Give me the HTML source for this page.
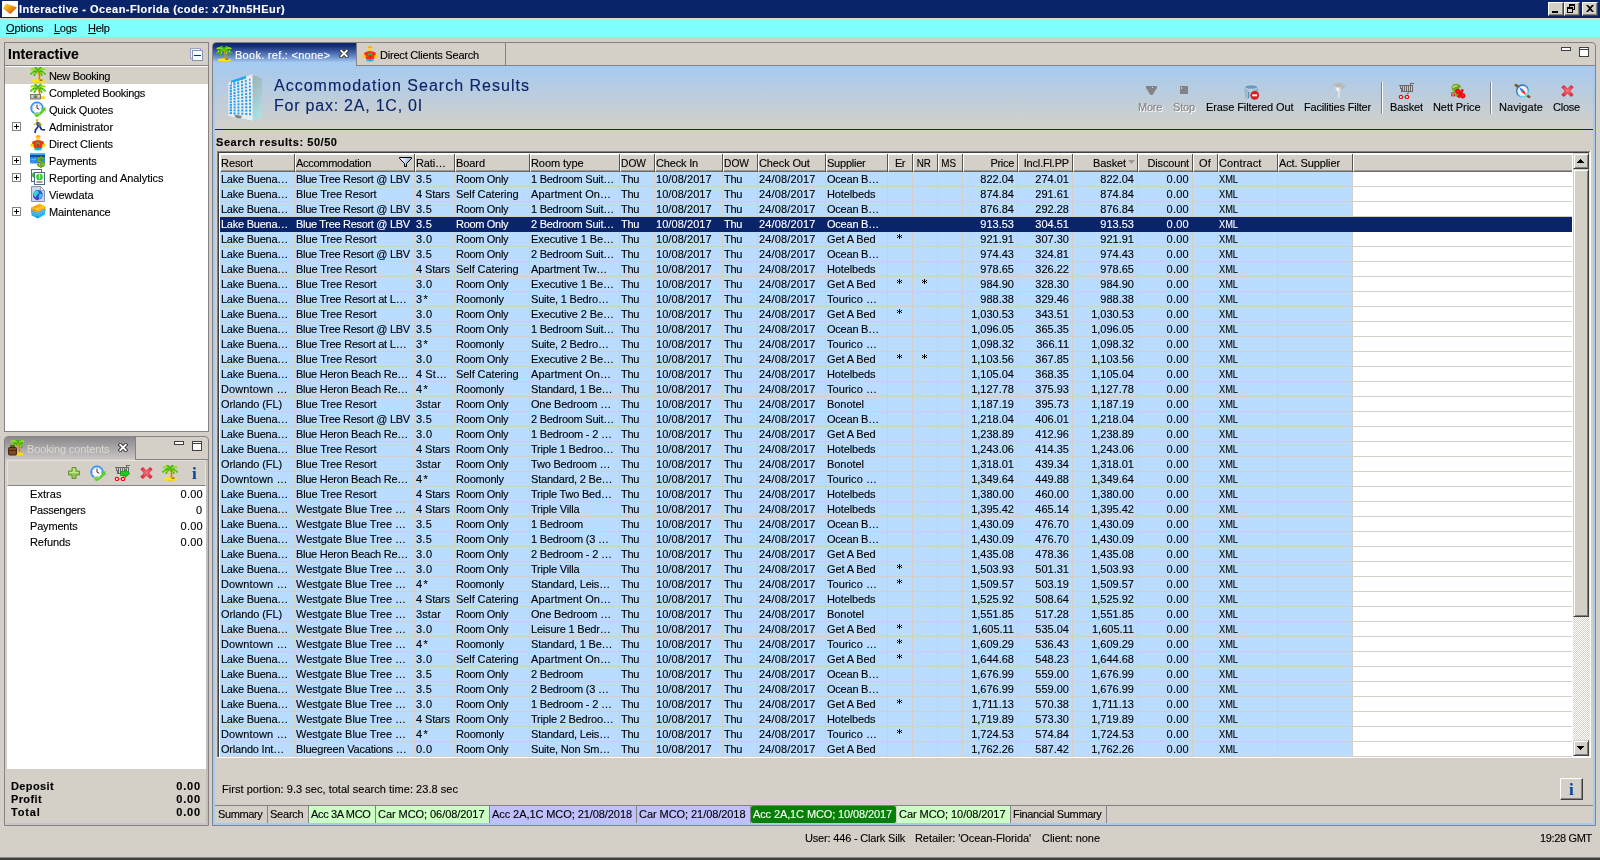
<!DOCTYPE html><html><head><meta charset="utf-8"><title>Interactive - Ocean-Florida</title>
<style>
html,body{margin:0;padding:0}
body{width:1600px;height:860px;background:#d4d0c8;position:relative;overflow:hidden;font-family:"Liberation Sans",sans-serif;font-size:11px;color:#000;line-height:13px;will-change:transform}
*{-webkit-text-stroke:0.12px currentColor}
div,span,i,b,svg{box-sizing:border-box}
.a{position:absolute}
.t{position:absolute;white-space:nowrap;height:13px}
i{font-style:normal}
/* title bar */
#title{left:0;top:0;width:1600px;height:18px;background:#0a246a}
.wb{position:absolute;top:2px;width:16px;height:14px;background:#d4d0c8;border:1px solid;border-color:#fff #404040 #404040 #fff;box-shadow:inset -1px -1px 0 #808080}
#menu{left:0;top:18px;width:1600px;height:19px;background:#80ffff}
/* table */
.tbl{position:absolute;left:217px;top:151px;width:1374px;height:607px;background:#fff;overflow:hidden}
.hc{position:absolute;top:3px;height:18px;background:#d4d0c8;border-top:1px solid #fff;border-left:1px solid #fff;border-bottom:1px solid #6e6c66;box-shadow:inset 0 -1px 0 #9c9a94;white-space:nowrap;overflow:hidden}
.hs{position:absolute;top:3px;width:1px;height:18px;background:#56544e}
.hc span{position:absolute;left:0px;top:2px;height:13px}
.hc.r span{left:auto;right:3px}
.hc.c span{left:-1px;right:0;text-align:center}
.row{position:absolute;left:3px;width:1133px;height:14px;background:#b9dcff}
.row.sel{background:#0a246a;color:#fff;width:1352px;z-index:3;height:15px}
.row span{position:absolute;top:1px;height:13px;white-space:nowrap;overflow:hidden}
.row span.r{text-align:right}
.row span.c{text-align:center}
.vl{position:absolute;top:21px;width:1px;height:585px;background:#d4d0c8}
.hl{position:absolute;left:3px;width:1352px;height:1px;background:#d4d0c8}

</style></head><body>
<div id="title" class="a"></div>
<svg class="a" style="left:2px;top:1px" width="16" height="16" viewBox="0 0 16 16"><defs><linearGradient id="ag" x1="0" y1="0" x2="1" y2="1"><stop offset="0" stop-color="#ffd840"/><stop offset=".35" stop-color="#f8a820"/><stop offset="1" stop-color="#c04808"/></linearGradient></defs><rect width="16" height="16" fill="#fff"/><path d="M1 7.500 L3.500 3.200 Q4 2.800 5 3 L14.300 6 Q15 6.500 14.300 7.200 L9 12.500 Q8.300 13 7.500 12.500Z" fill="url(#ag)"/></svg>
<span class="t" style="left:19px;top:3px;letter-spacing:0.441px;font-weight:bold;color:#fff;">Interactive - Ocean-Florida (code: x7Jhn5HEur)</span>
<div class="wb" style="left:1548px"><i class="a" style="left:3px;top:8px;width:6px;height:2px;background:#000"></i></div>
<div class="wb" style="left:1564px"><i class="a" style="left:4px;top:1px;width:6px;height:6px;border:1px solid #000;border-top-width:2px"></i><i class="a" style="left:2px;top:4px;width:6px;height:6px;border:1px solid #000;border-top-width:2px;background:#d4d0c8"></i></div>
<div class="wb" style="left:1582px"><svg class="a" style="left:3px;top:2px" width="8" height="7" viewBox="0 0 8 7"><path d="M0 0h2l2 2l2-2h2l-3 3.5l3 3.5h-2l-2-2l-2 2h-2l3-3.5z" fill="#000"/></svg></div>
<div id="menu" class="a"></div>
<div class="a" style="left:0px;top:18px;width:1600px;height:1px;background:#dcd9d2"></div>
<span class="t" style="left:6px;top:22px;letter-spacing:-0.06px;"><u>O</u>ptions</span>
<span class="t" style="left:54px;top:22px;letter-spacing:-0.277px;"><u>L</u>ogs</span>
<span class="t" style="left:88px;top:22px;letter-spacing:-0.281px;"><u>H</u>elp</span>
<div class="a" style="left:4px;top:42px;width:205px;height:390px;border:1px solid #848284;background:#fff"></div>
<div class="a" style="left:5px;top:43px;width:203px;height:22px;background:#d4d0c8"></div>
<div class="a" style="left:5px;top:65px;width:203px;height:1px;background:#848284"></div>
<span class="t" style="left:8px;top:46px;letter-spacing:0.087px;font-weight:bold;font-size:14px;line-height:16px;height:16px;">Interactive</span>
<svg class="a" style="left:190px;top:48px" width="13" height="13" viewBox="0 0 13 13"><rect x=".5" y=".5" width="10" height="10" fill="#e6f4ff" stroke="#9aa4c4"/><rect x="2.500" y="2.500" width="10" height="10" fill="#f4fbff" stroke="#8a94b4"/><rect x="4" y="7" width="7" height="1" fill="#003c74"/></svg>
<div class="a" style="left:5px;top:67px;width:203px;height:17px;background:#d4d0c8"></div>
<svg class="a" style="left:30px;top:67px" width="16" height="16" viewBox="0 0 16 16"><g transform="translate(0 0)"><ellipse cx="8.300" cy="14" rx="6.700" ry="1.800" fill="#ffe800"/><path d="M2 14.600 Q8.300 16.600 14.600 14.600 Q8.300 17.200 2 14.600Z" fill="#f0b400"/><rect x="9.500" y="12.600" width="3" height="1" fill="#503000"/><path d="M8 4 Q10.300 8 9.200 13.200" stroke="#f0a400" stroke-width="1.700" fill="none"/><path d="M8.600 6.300l1.100 .5M9 8.600l1.100 .4M8.900 10.900l1.100 .3" stroke="#a84800" stroke-width=".9"/><path d="M8 3.800 Q4.500 3.200 1 6.800" stroke="#48b408" stroke-width="1.8" fill="none" stroke-linecap="round"/><path d="M8 3.800 Q11.500 3.200 15 6.800" stroke="#48b408" stroke-width="1.8" fill="none" stroke-linecap="round"/><path d="M8 3.800 Q5.800 4.800 4.300 8.200" stroke="#48b408" stroke-width="1.7" fill="none" stroke-linecap="round"/><path d="M8 3.800 Q10.200 4.800 11.700 8.200" stroke="#48b408" stroke-width="1.7" fill="none" stroke-linecap="round"/><path d="M8 3.800 Q5 .6 1.300 2.600" stroke="#8ce020" stroke-width="1.7" fill="none" stroke-linecap="round"/><path d="M8 3.800 Q11 .6 14.700 2.600" stroke="#8ce020" stroke-width="1.7" fill="none" stroke-linecap="round"/><path d="M8 3.800 Q7.300 1.200 5 .2" stroke="#48b408" stroke-width="1.5" fill="none" stroke-linecap="round"/><path d="M8 3.800 Q8.700 1.200 11 .2" stroke="#48b408" stroke-width="1.5" fill="none" stroke-linecap="round"/><path d="M2.500 4.500 L2 6.500 M5 5.500 L5.500 7.500 M13.500 4.500 L14 6.500 M11 5.500 L10.500 7.500" stroke="#8ce020" stroke-width="1.0" fill="none" stroke-linecap="round"/></g></svg>
<span class="t" style="left:49px;top:70px;letter-spacing:-0.348px;">New Booking</span>
<svg class="a" style="left:30px;top:84px" width="16" height="16" viewBox="0 0 16 16"><g transform="translate(0 0)"><path d="M8 4 Q10.300 8 9.200 13.200" stroke="#f0a400" stroke-width="1.700" fill="none"/><path d="M8.600 6.300l1.100 .5M9 8.600l1.100 .4M8.900 10.900l1.100 .3" stroke="#a84800" stroke-width=".9"/><path d="M8 3.800 Q4.500 3.200 1 6.800" stroke="#48b408" stroke-width="1.8" fill="none" stroke-linecap="round"/><path d="M8 3.800 Q11.500 3.200 15 6.800" stroke="#48b408" stroke-width="1.8" fill="none" stroke-linecap="round"/><path d="M8 3.800 Q5.800 4.800 4.300 8.200" stroke="#48b408" stroke-width="1.7" fill="none" stroke-linecap="round"/><path d="M8 3.800 Q10.200 4.800 11.700 8.200" stroke="#48b408" stroke-width="1.7" fill="none" stroke-linecap="round"/><path d="M8 3.800 Q5 .6 1.300 2.600" stroke="#8ce020" stroke-width="1.7" fill="none" stroke-linecap="round"/><path d="M8 3.800 Q11 .6 14.700 2.600" stroke="#8ce020" stroke-width="1.7" fill="none" stroke-linecap="round"/><path d="M8 3.800 Q7.300 1.200 5 .2" stroke="#48b408" stroke-width="1.5" fill="none" stroke-linecap="round"/><path d="M8 3.800 Q8.700 1.200 11 .2" stroke="#48b408" stroke-width="1.5" fill="none" stroke-linecap="round"/><path d="M2.500 4.500 L2 6.500 M5 5.500 L5.500 7.500 M13.500 4.500 L14 6.500 M11 5.500 L10.500 7.500" stroke="#8ce020" stroke-width="1.0" fill="none" stroke-linecap="round"/></g><ellipse cx="12" cy="13.500" rx="3.500" ry="1.500" fill="#ffd800"/><rect x=".5" y="10.500" width="10" height="4.500" fill="#b4b8a0" stroke="#70745c" stroke-width=".9"/><circle cx="5.500" cy="12.700" r="1.500" fill="#6c7060"/><rect x="1.500" y="11.500" width="1.500" height="1" fill="#fff"/><rect x="8" y="11.500" width="1.500" height="1" fill="#fff"/></svg>
<span class="t" style="left:49px;top:87px;letter-spacing:-0.306px;">Completed Bookings</span>
<svg class="a" style="left:30px;top:101px" width="16" height="16" viewBox="0 0 16 16"><circle cx="7" cy="7.200" r="6.600" fill="#1e90ff"/><circle cx="7" cy="7.200" r="5" fill="#fff" stroke="#b0c8e0" stroke-width=".6"/><path d="M7 3.800V7.200L9.300 8.300" stroke="#303030" stroke-width="1" fill="none"/><path d="M7 2.600v.8M7 11v.8M2.400 7.200h.8M10.800 7.200h.8M3.800 4l.5.500M10.200 4l-.5.500M3.800 10.400l.5-.5" stroke="#505050" stroke-width=".7"/><path d="M3 11.500 C5.500 14 10 13 12.500 8.500 L11 8 L15.500 6 L15.500 11 L14.200 9.800 C11.500 14.500 7 16.500 5.500 16 C6 15 4 13.500 3 11.500Z" fill="#58cc20"/><path d="M4 12.300 Q7 14 10 12.500" stroke="#a8f060" stroke-width=".8" fill="none"/></svg>
<span class="t" style="left:49px;top:104px;letter-spacing:-0.22px;">Quick Quotes</span>
<svg class="a" style="left:30px;top:118px" width="16" height="16" viewBox="0 0 16 16"><path d="M6 .8 L8.500 1.500 L8 3.500 L5.800 3Z" fill="#f0b820"/><path d="M6.500 3.500 L10 4.500 L11 8.500 L7.500 9.500 L6 6Z" fill="#3c50a0"/><path d="M8 5 L10.500 5.500 L11 8 L8.800 8.300Z" fill="#48a040"/><path d="M9.500 4.500 L12 7" stroke="#f0b820" stroke-width="1.300"/><path d="M6.500 5 L3.500 6.800" stroke="#f0b820" stroke-width="1.200"/><path d="M7.800 9 L5.500 12 L5 15 M9.800 8.500 L11.500 11.500 L15 11.800" stroke="#1c2c9c" stroke-width="1.700" fill="none" stroke-linejoin="round"/></svg>
<span class="t" style="left:49px;top:121px;letter-spacing:-0.061px;">Administrator</span>
<div class="a" style="left:12px;top:122px;width:9px;height:9px;border:1px solid #848284;background:#fff"><i class="a" style="left:1px;top:3px;width:5px;height:1px;background:#000"></i><i class="a" style="left:3px;top:1px;width:1px;height:5px;background:#000"></i></div>
<svg class="a" style="left:30px;top:135px" width="16" height="16" viewBox="0 0 16 16"><circle cx="8" cy="2.800" r="2.300" fill="#ffd040"/><path d="M5.500 1.200 Q8 -1 10.500 1.200 L10 2 L6 2Z" fill="#ffb000"/><path d="M2.500 6.500 Q8 3.500 13.500 6.500 L14.500 10.500 L12.500 11 L12 13.200 L4 13.200 L3.500 11 L1.500 10.500 Z" fill="#f83410"/><rect x="6.300" y="7.200" width="3.600" height="2.800" fill="#28c048"/><rect x="7.300" y="9" width="1.500" height="2.500" fill="#c02000"/><rect x="4.500" y="13" width="7" height="2.300" fill="#20c0d0"/><rect x="7.500" y="13" width="1" height="2.300" fill="#0890a0"/><circle cx="2" cy="10.300" r="1.700" fill="#ffd800"/><circle cx="14" cy="10.300" r="1.700" fill="#ffd800"/></svg>
<span class="t" style="left:49px;top:138px;letter-spacing:-0.1px;">Direct Clients</span>
<svg class="a" style="left:30px;top:152px" width="16" height="16" viewBox="0 0 16 16"><rect x="0" y="1" width="15" height="10.500" rx="1" fill="#2c8cec"/><rect x="0" y="1" width="15" height="1.500" rx=".8" fill="#60b4ff"/><rect x="0" y="3" width="15" height="2" fill="#104c94"/><rect x="1.500" y="7" width="4" height="1" fill="#70c0ff"/><path d="M1 10.500 L6 6" stroke="#58a8f4" stroke-width=".8"/><text x="11" y="15.200" font-size="14" font-weight="bold" text-anchor="middle" fill="#88c818" stroke="#507c08" stroke-width=".5" font-family="Liberation Sans">$</text></svg>
<span class="t" style="left:49px;top:155px;letter-spacing:-0.178px;">Payments</span>
<div class="a" style="left:12px;top:156px;width:9px;height:9px;border:1px solid #848284;background:#fff"><i class="a" style="left:1px;top:3px;width:5px;height:1px;background:#000"></i><i class="a" style="left:3px;top:1px;width:1px;height:5px;background:#000"></i></div>
<svg class="a" style="left:30px;top:169px" width="16" height="16" viewBox="0 0 16 16"><rect x="1.500" y=".5" width="10" height="12" fill="#fff" stroke="#4c6c84"/><circle cx="5" cy="6" r="3" fill="#30c030"/><rect x="4.500" y="3.500" width="10" height="12" fill="#fff" stroke="#4c6c84"/><circle cx="9.500" cy="8" r="3.300" fill="#28c428"/><circle cx="9.500" cy="7.500" r="2.200" fill="#48dc48"/><rect x="9" y="5.500" width="1" height="3.200" fill="#fff"/><rect x="9" y="9.300" width="1" height="1" fill="#fff"/><rect x="6.500" y="12.500" width="6" height="1" fill="#503c3c"/></svg>
<span class="t" style="left:49px;top:172px;letter-spacing:-0.047px;">Reporting and Analytics</span>
<div class="a" style="left:12px;top:173px;width:9px;height:9px;border:1px solid #848284;background:#fff"><i class="a" style="left:1px;top:3px;width:5px;height:1px;background:#000"></i><i class="a" style="left:3px;top:1px;width:1px;height:5px;background:#000"></i></div>
<svg class="a" style="left:30px;top:186px" width="16" height="16" viewBox="0 0 16 16"><path d="M1.500 .5 H10.500 L14.500 4.500 V15.500 H1.500Z" fill="#ccd8ec" stroke="#8494b0"/><path d="M10.500 .5 V4.500 H14.500Z" fill="#f4f8ff" stroke="#8494b0" stroke-width=".8"/><circle cx="8" cy="8.800" r="4.800" fill="#3050e0"/><path d="M4 6.500 Q6 4 8.500 5 Q9.500 7 7.500 8.500 Q6 9.500 5 12 Q3.500 10 4 6.500Z" fill="#30d8d0"/><path d="M9.500 7.500 Q12 7 12.500 9.500 Q11.500 12.500 9 13 Q8.500 10.500 9.500 7.500Z" fill="#40c8e0"/><path d="M3.500 10 Q5 13.500 8.500 13.600" stroke="#7020c0" stroke-width="1.200" fill="none"/></svg>
<span class="t" style="left:49px;top:189px;letter-spacing:-0.07px;">Viewdata</span>
<svg class="a" style="left:30px;top:203px" width="16" height="16" viewBox="0 0 16 16"><path d="M1 4.500 L9.500 .8 L15.500 3 L7 7Z" fill="#ffc820"/><path d="M2.500 4.500 L9.500 1.600 M4.500 5.200 L11.500 2.300" stroke="#ff9000" stroke-width=".9"/><path d="M1 4.500 L7 7 L7 9.500 L1 7Z" fill="#f09800"/><path d="M7 7 L15.500 3 L15.500 5.500 L7 9.500Z" fill="#ffb000"/><path d="M1 7 L7 9.500 L15.500 5.500 L15.500 8.500 L7 12.500 L1 10Z" fill="#3098e8"/><path d="M1 8.500 L7 11 L15.500 7" stroke="#70d0ff" stroke-width=".8" fill="none"/><path d="M1.500 10 L7 12.500 L15 8.800 L15 11.500 L8 15.500 L1.500 12.500Z" fill="#18b8e8"/><path d="M7 12.500 V15" stroke="#0860b0" stroke-width=".8"/></svg>
<span class="t" style="left:49px;top:206px;letter-spacing:-0.136px;">Maintenance</span>
<div class="a" style="left:12px;top:207px;width:9px;height:9px;border:1px solid #848284;background:#fff"><i class="a" style="left:1px;top:3px;width:5px;height:1px;background:#000"></i><i class="a" style="left:3px;top:1px;width:1px;height:5px;background:#000"></i></div>
<div class="a" style="left:4px;top:436px;width:205px;height:390px;border:1px solid #848284;border-radius:4px 4px 0 0;background:#d4d0c8"></div>
<div class="a" style="left:5px;top:437px;width:131px;height:22px;background:linear-gradient(#8a888c,#c8c4c6);border-radius:3px 0 0 0"></div>
<div class="a" style="left:135px;top:438px;width:1px;height:22px;background:#848284"></div>
<div class="a" style="left:135px;top:459px;width:73px;height:1px;background:#848284"></div>
<svg class="a" style="left:8px;top:440px" width="16" height="16" viewBox="0 0 16 16"><g transform="translate(2 -1)"><path d="M8 4 Q10.300 8 9.200 13.200" stroke="#f0a400" stroke-width="1.700" fill="none"/><path d="M8.600 6.300l1.100 .5M9 8.600l1.100 .4M8.900 10.900l1.100 .3" stroke="#a84800" stroke-width=".9"/><path d="M8 3.800 Q4.500 3.200 1 6.800" stroke="#48b408" stroke-width="1.8" fill="none" stroke-linecap="round"/><path d="M8 3.800 Q11.500 3.200 15 6.800" stroke="#48b408" stroke-width="1.8" fill="none" stroke-linecap="round"/><path d="M8 3.800 Q5.800 4.800 4.300 8.200" stroke="#48b408" stroke-width="1.7" fill="none" stroke-linecap="round"/><path d="M8 3.800 Q10.200 4.800 11.700 8.200" stroke="#48b408" stroke-width="1.7" fill="none" stroke-linecap="round"/><path d="M8 3.800 Q5 .6 1.300 2.600" stroke="#8ce020" stroke-width="1.7" fill="none" stroke-linecap="round"/><path d="M8 3.800 Q11 .6 14.700 2.600" stroke="#8ce020" stroke-width="1.7" fill="none" stroke-linecap="round"/><path d="M8 3.800 Q7.300 1.200 5 .2" stroke="#48b408" stroke-width="1.5" fill="none" stroke-linecap="round"/><path d="M8 3.800 Q8.700 1.200 11 .2" stroke="#48b408" stroke-width="1.5" fill="none" stroke-linecap="round"/><path d="M2.500 4.500 L2 6.500 M5 5.500 L5.500 7.500 M13.500 4.500 L14 6.500 M11 5.500 L10.500 7.500" stroke="#8ce020" stroke-width="1.0" fill="none" stroke-linecap="round"/></g><ellipse cx="11.500" cy="14" rx="4" ry="1.500" fill="#ffd800"/><rect x=".5" y="7.500" width="8" height="7.500" rx="1" fill="#7a4a28" stroke="#402000" stroke-width=".9"/><rect x="3" y="5.800" width="3" height="1.800" fill="none" stroke="#402000" stroke-width=".9"/><rect x="1" y="10" width="7" height="1" fill="#502808"/></svg>
<span class="t" style="left:27px;top:443px;letter-spacing:-0.118px;color:#dad6ce;">Booking contents</span>
<svg class="a" style="left:118px;top:443px" width="10" height="9" viewBox="0 0 10 9"><path d="M2.300 1.800L7.700 7.200M7.700 1.800L2.300 7.200" stroke="#3c3c3c" stroke-width="3.800" stroke-linecap="square"/><path d="M2.300 1.800L7.700 7.200M7.700 1.800L2.300 7.200" stroke="#fff" stroke-width="1.900" stroke-linecap="square"/></svg>
<svg class="a" style="left:174px;top:441px" width="10" height="4" viewBox="0 0 10 4"><rect x=".5" y=".5" width="9" height="3" fill="#fff" stroke="#404040"/></svg>
<svg class="a" style="left:192px;top:441px" width="10" height="10" viewBox="0 0 10 10"><rect x=".5" y=".5" width="9" height="9" fill="#fff" stroke="#404040"/><rect x="1" y="2" width="8" height="1" fill="#404040"/></svg>
<div class="a" style="left:7px;top:460px;width:199px;height:26px;border:1px solid #e4e2dc;border-bottom:1px solid #848284"></div>
<div class="a" style="left:206px;top:460px;width:2px;height:364px;background:#c2beb8"></div>
<svg class="a" style="left:68px;top:467px" width="12" height="12" viewBox="0 0 12 12"><path d="M4 .5h4v3.500h3.500v4h-3.500v3.500h-4v-3.500h-3.500v-4h3.500z" fill="#98c858" stroke="#5c8c28" stroke-width=".9"/><path d="M5 1.500h2v3.500h3.500v1h-9v-1h3.500z" fill="#c4e48c"/></svg>
<svg class="a" style="left:90px;top:465px" width="16" height="16" viewBox="0 0 16 16"><circle cx="7" cy="7.200" r="6.600" fill="#1e90ff"/><circle cx="7" cy="7.200" r="5" fill="#fff" stroke="#b0c8e0" stroke-width=".6"/><path d="M7 3.800V7.200L9.300 8.300" stroke="#303030" stroke-width="1" fill="none"/><path d="M7 2.600v.8M7 11v.8M2.400 7.200h.8M10.800 7.200h.8M3.800 4l.5.500M10.200 4l-.5.500M3.800 10.400l.5-.5" stroke="#505050" stroke-width=".7"/><path d="M3 11.500 C5.500 14 10 13 12.500 8.500 L11 8 L15.500 6 L15.500 11 L14.200 9.800 C11.500 14.500 7 16.500 5.500 16 C6 15 4 13.500 3 11.500Z" fill="#58cc20"/><path d="M4 12.300 Q7 14 10 12.500" stroke="#a8f060" stroke-width=".8" fill="none"/></svg>
<svg class="a" style="left:114px;top:465px" width="16" height="16" viewBox="0 0 16 16"><g shape-rendering="crispEdges" stroke="#6c6a68" fill="none"><path d="M1 2.500H15M2.500 2.500V5.500H3.500V8.500M3 8.500H15M14.500 2.500V8.500M12.500 2.500V.5H16" stroke-width="1"/><path d="M4.500 3V8M6.500 3V8M8.500 3V8M10.500 3V8M12.500 3V8" stroke-width="1"/></g><path d="M10.500 9 L9.300 11.500" stroke="#6c6a68" stroke-width="1"/><path d="M4.500 13.900H7.400" stroke="#5c9090" stroke-width=".9"/><circle cx="2.900" cy="13.900" r="1.600" fill="#e4ffff" stroke="#f00808" stroke-width="1.200"/><circle cx="9" cy="13.900" r="1.600" fill="#e4ffff" stroke="#f00808" stroke-width="1.200"/><path d="M6.500 6.500 H11 V4.300 L15.800 8.500 L11 12.700 V10.500 H6.500Z" fill="#18cc18" stroke="#0c8c0c" stroke-width=".6"/></svg>
<svg class="a" style="left:140px;top:467px" width="13" height="12" viewBox="0 0 13 12"><defs><radialGradient id="rx1" cx=".5" cy=".45" r=".6"><stop offset="0" stop-color="#f87880"/><stop offset=".6" stop-color="#f04858"/><stop offset="1" stop-color="#dc2038"/></radialGradient></defs><path d="M.8 2.200 L2.800 .4 L6.500 3.800 L10.200 .4 L12.200 2.200 L8.700 6 L12.200 9.800 L10.200 11.600 L6.500 8.200 L2.800 11.600 L.8 9.800 L4.300 6Z" fill="url(#rx1)" stroke="#d42030" stroke-width=".7" stroke-linejoin="round"/></svg>
<svg class="a" style="left:162px;top:465px" width="16" height="16" viewBox="0 0 16 16"><g transform="translate(0 0)"><ellipse cx="8.300" cy="14" rx="6.700" ry="1.800" fill="#ffe800"/><path d="M2 14.600 Q8.300 16.600 14.600 14.600 Q8.300 17.200 2 14.600Z" fill="#f0b400"/><rect x="9.500" y="12.600" width="3" height="1" fill="#503000"/><path d="M8 4 Q10.300 8 9.200 13.200" stroke="#f0a400" stroke-width="1.700" fill="none"/><path d="M8.600 6.300l1.100 .5M9 8.600l1.100 .4M8.900 10.900l1.100 .3" stroke="#a84800" stroke-width=".9"/><path d="M8 3.800 Q4.500 3.200 1 6.800" stroke="#48b408" stroke-width="1.8" fill="none" stroke-linecap="round"/><path d="M8 3.800 Q11.500 3.200 15 6.800" stroke="#48b408" stroke-width="1.8" fill="none" stroke-linecap="round"/><path d="M8 3.800 Q5.800 4.800 4.300 8.200" stroke="#48b408" stroke-width="1.7" fill="none" stroke-linecap="round"/><path d="M8 3.800 Q10.200 4.800 11.700 8.200" stroke="#48b408" stroke-width="1.7" fill="none" stroke-linecap="round"/><path d="M8 3.800 Q5 .6 1.300 2.600" stroke="#8ce020" stroke-width="1.7" fill="none" stroke-linecap="round"/><path d="M8 3.800 Q11 .6 14.700 2.600" stroke="#8ce020" stroke-width="1.7" fill="none" stroke-linecap="round"/><path d="M8 3.800 Q7.300 1.200 5 .2" stroke="#48b408" stroke-width="1.5" fill="none" stroke-linecap="round"/><path d="M8 3.800 Q8.700 1.200 11 .2" stroke="#48b408" stroke-width="1.5" fill="none" stroke-linecap="round"/><path d="M2.500 4.500 L2 6.500 M5 5.500 L5.500 7.500 M13.500 4.500 L14 6.500 M11 5.500 L10.500 7.500" stroke="#8ce020" stroke-width="1.0" fill="none" stroke-linecap="round"/></g></svg>
<span class="t" style="left:192px;top:465px;letter-spacing:-0.2px;color:#0a48a0;font-family:'Liberation Serif',serif;font-weight:bold;font-size:17px;line-height:17px;height:17px">i</span>
<div class="a" style="left:7px;top:486px;width:199px;height:283px;background:#fff"></div>
<span class="t" style="left:30px;top:488px;letter-spacing:0.052px;">Extras</span>
<span class="t" style="right:1397px;top:488px;letter-spacing:0.27px;">0.00</span>
<span class="t" style="left:30px;top:504px;letter-spacing:-0.259px;">Passengers</span>
<span class="t" style="right:1397px;top:504px;letter-spacing:0.875px;">0</span>
<span class="t" style="left:30px;top:520px;letter-spacing:-0.178px;">Payments</span>
<span class="t" style="right:1397px;top:520px;letter-spacing:0.27px;">0.00</span>
<span class="t" style="left:30px;top:536px;letter-spacing:-0.069px;">Refunds</span>
<span class="t" style="right:1397px;top:536px;letter-spacing:0.27px;">0.00</span>
<span class="t" style="left:11px;top:780px;letter-spacing:0.379px;font-weight:bold;">Deposit</span>
<span class="t" style="right:1399px;top:780px;letter-spacing:0.845px;font-weight:bold;">0.00</span>
<span class="t" style="left:11px;top:793px;letter-spacing:0.378px;font-weight:bold;">Profit</span>
<span class="t" style="right:1399px;top:793px;letter-spacing:0.845px;font-weight:bold;">0.00</span>
<span class="t" style="left:11px;top:806px;letter-spacing:0.806px;font-weight:bold;">Total</span>
<span class="t" style="right:1399px;top:806px;letter-spacing:0.845px;font-weight:bold;">0.00</span>
<div class="a" style="left:6px;top:823px;width:201px;height:2px;background:#c6c4c4"></div>
<div class="a" style="left:212px;top:42px;width:1384px;height:784px;border:1px solid #848284;border-radius:4px 4px 0 0;background:#d4d0c8"></div>
<div class="a" style="left:213px;top:66px;width:1382px;height:759px;border:2px solid #a6caf0"></div>
<div class="a" style="left:213px;top:43px;width:143px;height:23px;background:linear-gradient(#0a246a 0,#16307a 15%,#5f82c4 55%,#a6caf0 85%);border-radius:3px 0 0 0"></div>
<div class="a" style="left:356px;top:43px;width:1px;height:23px;background:#848284"></div>
<div class="a" style="left:356px;top:65px;width:1239px;height:1px;background:#848284"></div>
<div class="a" style="left:505px;top:43px;width:1px;height:22px;background:#848284"></div>
<svg class="a" style="left:216px;top:46px" width="16" height="16" viewBox="0 0 16 16"><g transform="translate(0 0)"><ellipse cx="8.300" cy="14" rx="6.700" ry="1.800" fill="#ffe800"/><path d="M2 14.600 Q8.300 16.600 14.600 14.600 Q8.300 17.200 2 14.600Z" fill="#f0b400"/><rect x="9.500" y="12.600" width="3" height="1" fill="#503000"/><path d="M8 4 Q10.300 8 9.200 13.200" stroke="#f0a400" stroke-width="1.700" fill="none"/><path d="M8.600 6.300l1.100 .5M9 8.600l1.100 .4M8.900 10.900l1.100 .3" stroke="#a84800" stroke-width=".9"/><path d="M8 3.800 Q4.500 3.200 1 6.800" stroke="#48b408" stroke-width="1.8" fill="none" stroke-linecap="round"/><path d="M8 3.800 Q11.500 3.200 15 6.800" stroke="#48b408" stroke-width="1.8" fill="none" stroke-linecap="round"/><path d="M8 3.800 Q5.800 4.800 4.300 8.200" stroke="#48b408" stroke-width="1.7" fill="none" stroke-linecap="round"/><path d="M8 3.800 Q10.200 4.800 11.700 8.200" stroke="#48b408" stroke-width="1.7" fill="none" stroke-linecap="round"/><path d="M8 3.800 Q5 .6 1.300 2.600" stroke="#8ce020" stroke-width="1.7" fill="none" stroke-linecap="round"/><path d="M8 3.800 Q11 .6 14.700 2.600" stroke="#8ce020" stroke-width="1.7" fill="none" stroke-linecap="round"/><path d="M8 3.800 Q7.300 1.200 5 .2" stroke="#48b408" stroke-width="1.5" fill="none" stroke-linecap="round"/><path d="M8 3.800 Q8.700 1.200 11 .2" stroke="#48b408" stroke-width="1.5" fill="none" stroke-linecap="round"/><path d="M2.500 4.500 L2 6.500 M5 5.500 L5.500 7.500 M13.500 4.500 L14 6.500 M11 5.500 L10.500 7.500" stroke="#8ce020" stroke-width="1.0" fill="none" stroke-linecap="round"/></g></svg>
<span class="t" style="left:235px;top:49px;letter-spacing:0.271px;color:#fff;">Book. ref.: &lt;none&gt;</span>
<svg class="a" style="left:339px;top:49px" width="10" height="9" viewBox="0 0 10 9"><path d="M2.300 1.800L7.700 7.200M7.700 1.800L2.300 7.200" stroke="#3c3c3c" stroke-width="3.800" stroke-linecap="square"/><path d="M2.300 1.800L7.700 7.200M7.700 1.800L2.300 7.200" stroke="#fff" stroke-width="1.900" stroke-linecap="square"/></svg>
<svg class="a" style="left:362px;top:46px" width="16" height="16" viewBox="0 0 16 16"><circle cx="8" cy="2.800" r="2.300" fill="#ffd040"/><path d="M5.500 1.200 Q8 -1 10.500 1.200 L10 2 L6 2Z" fill="#ffb000"/><path d="M2.500 6.500 Q8 3.500 13.500 6.500 L14.500 10.500 L12.500 11 L12 13.200 L4 13.200 L3.500 11 L1.500 10.500 Z" fill="#f83410"/><rect x="6.300" y="7.200" width="3.600" height="2.800" fill="#28c048"/><rect x="7.300" y="9" width="1.500" height="2.500" fill="#c02000"/><rect x="4.500" y="13" width="7" height="2.300" fill="#20c0d0"/><rect x="7.500" y="13" width="1" height="2.300" fill="#0890a0"/><circle cx="2" cy="10.300" r="1.700" fill="#ffd800"/><circle cx="14" cy="10.300" r="1.700" fill="#ffd800"/></svg>
<span class="t" style="left:380px;top:49px;letter-spacing:-0.206px;">Direct Clients Search</span>
<svg class="a" style="left:1561px;top:47px" width="10" height="4" viewBox="0 0 10 4"><rect x=".5" y=".5" width="9" height="3" fill="#fff" stroke="#404040"/></svg>
<svg class="a" style="left:1579px;top:47px" width="10" height="10" viewBox="0 0 10 10"><rect x=".5" y=".5" width="9" height="9" fill="#fff" stroke="#404040"/><rect x="1" y="2" width="8" height="1" fill="#404040"/></svg>
<div class="a" style="left:215px;top:66px;width:1378px;height:63px;background:linear-gradient(#a6caf0,#d4d0c8)"></div>
<div class="a" style="left:215px;top:129px;width:1378px;height:1px;background:#0a246a"></div>
<svg class="a" style="left:228px;top:74px" width="34" height="47" viewBox="0 0 34 47"><defs><linearGradient id="bs" x1="0" y1="0" x2=".3" y2="1"><stop offset="0" stop-color="#9cb0b0"/><stop offset=".55" stop-color="#a4c8cc"/><stop offset="1" stop-color="#a8e0e4"/></linearGradient></defs><path d="M.3 8.500 L24 .4 L24 46.500 L.3 42Z" fill="#e2e8ec"/><path d="M24 .4 L34 4.500 L34 42.500 L24 46.500Z" fill="url(#bs)"/><path d="M24 .4V46.500" stroke="#f4f8fa" stroke-width="1"/><path d="M3 6.800 L18 1.700 L18 4.600 L3 9.900Z" fill="#20a8f4"/><path d="M1.800 11.80 L23 5.20" stroke="#249cec" stroke-width="1.900" stroke-dasharray="2.200 1.650"/><path d="M1.800 14.52 L23 8.70" stroke="#249cec" stroke-width="1.900" stroke-dasharray="2.200 1.650"/><path d="M1.800 17.24 L23 12.20" stroke="#249cec" stroke-width="1.900" stroke-dasharray="2.200 1.650"/><path d="M1.800 19.96 L23 15.70" stroke="#249cec" stroke-width="1.900" stroke-dasharray="2.200 1.650"/><path d="M1.800 22.68 L23 19.20" stroke="#249cec" stroke-width="1.900" stroke-dasharray="2.200 1.650"/><path d="M1.800 25.40 L23 22.70" stroke="#249cec" stroke-width="1.900" stroke-dasharray="2.200 1.650"/><path d="M1.800 28.12 L23 26.20" stroke="#249cec" stroke-width="1.900" stroke-dasharray="2.200 1.650"/><path d="M1.800 30.84 L23 29.70" stroke="#249cec" stroke-width="1.900" stroke-dasharray="2.200 1.650"/><path d="M1.800 33.56 L23 33.20" stroke="#249cec" stroke-width="1.900" stroke-dasharray="2.200 1.650"/><path d="M1.800 36.28 L23 36.70" stroke="#249cec" stroke-width="1.900" stroke-dasharray="2.200 1.650"/><path d="M1.800 39.00 L23 40.20" stroke="#249cec" stroke-width="1.900" stroke-dasharray="2.200 1.650"/><path d="M4.500 8.0 L4.500 42.500 M8.300 7.0 L8.300 43.500 M12.200 6.0 L12.200 44 M16.200 5.0 L16.200 45 M20.300 3.0 L20.300 45.500" stroke="#eef2f4" stroke-width="1.100"/><path d="M6 40.500 L14 42 L12.500 44.500 L8 43.800Z" fill="#7c8488"/></svg>
<span class="t" style="left:274px;top:77px;letter-spacing:1.012px;font-size:16px;line-height:18px;height:18px;color:#0a246a;">Accommodation Search Results</span>
<span class="t" style="left:274px;top:97px;letter-spacing:0.775px;font-size:16px;line-height:18px;height:18px;color:#0a246a;">For pax: 2A, 1C, 0I</span>
<svg class="a" style="left:1146px;top:86px" width="11" height="9" viewBox="0 0 11 9"><path d="M0 0H11V2L6.500 9H4.500L0 2Z" fill="#848284"/><rect x="6" y="1" width="1" height="1" fill="#d8d8d8"/></svg>
<span class="t" style="left:1139px;top:102px;letter-spacing:-0.266px;color:#fff;">More</span>
<span class="t" style="left:1138px;top:101px;letter-spacing:-0.266px;color:#848284;">More</span>
<svg class="a" style="left:1180px;top:86px" width="8" height="8" viewBox="0 0 8 8"><rect width="8" height="8" fill="#848284"/><rect x="1" y="1" width="1" height="2" fill="#d8d8d8"/></svg>
<span class="t" style="left:1174px;top:102px;letter-spacing:-0.16px;color:#fff;">Stop</span>
<span class="t" style="left:1173px;top:101px;letter-spacing:-0.16px;color:#848284;">Stop</span>
<svg class="a" style="left:1244px;top:84px" width="16" height="16" viewBox="0 0 16 16"><defs><linearGradient id="eb" x1="0" x2="1"><stop offset="0" stop-color="#8ca8c0"/><stop offset=".45" stop-color="#bcd4e4"/><stop offset="1" stop-color="#88a4bc"/></linearGradient></defs><path d="M.3 3 L1.500 14.600 Q7 16 13 14.600 L14.200 3Z" fill="url(#eb)"/><ellipse cx="7.250" cy="3" rx="7" ry="2.700" fill="#bcd8e8"/><ellipse cx="7.250" cy="3" rx="6" ry="1.800" fill="#6c98c0"/><rect x="4" y="8" width="1.200" height="6" fill="#5c8cb8"/><circle cx="10.700" cy="11.300" r="4.400" fill="#d42020"/><rect x="8.200" y="10" width="5" height="1" fill="#f4b0b0"/><rect x="8.200" y="11" width="5" height="1.300" fill="#fff"/></svg>
<span class="t" style="left:1206px;top:101px;letter-spacing:-0.098px;">Erase Filtered Out</span>
<svg class="a" style="left:1331px;top:83px" width="16" height="16" viewBox="0 0 16 16"><defs><linearGradient id="fn" x1="0" x2="1"><stop offset="0" stop-color="#d0d0d0"/><stop offset=".4" stop-color="#fafafa"/><stop offset="1" stop-color="#8c8c8c"/></linearGradient></defs><path d="M2 2.500 L7.200 9 V15 H8.800 V9 L14 2.500Z" fill="url(#fn)"/><ellipse cx="8" cy="2.300" rx="6" ry="1.900" fill="#d4d4d4" stroke="#acacac" stroke-width=".6"/><ellipse cx="8" cy="2.400" rx="4.500" ry="1.100" fill="#b0b0b0"/></svg>
<span class="t" style="left:1304px;top:101px;letter-spacing:-0.194px;">Facilities Filter</span>
<div class="a" style="left:1381px;top:82px;width:1px;height:32px;background:#848284"></div>
<div class="a" style="left:1382px;top:82px;width:1px;height:32px;background:#fff"></div>
<svg class="a" style="left:1398px;top:83px" width="16" height="16" viewBox="0 0 16 16"><g shape-rendering="crispEdges" stroke="#6c6a68" fill="none"><path d="M1 2.500H15M2.500 2.500V5.500H3.500V8.500M3 8.500H15M14.500 2.500V8.500M12.500 2.500V.5H16" stroke-width="1"/><path d="M4.500 3V8M6.500 3V8M8.500 3V8M10.500 3V8M12.500 3V8" stroke-width="1"/></g><path d="M10.500 9 L9.300 11.500" stroke="#6c6a68" stroke-width="1"/><path d="M4.500 13.900H7.400" stroke="#5c9090" stroke-width=".9"/><circle cx="2.900" cy="13.900" r="1.600" fill="#e4ffff" stroke="#f00808" stroke-width="1.200"/><circle cx="9" cy="13.900" r="1.600" fill="#e4ffff" stroke="#f00808" stroke-width="1.200"/></svg>
<span class="t" style="left:1390px;top:101px;letter-spacing:-0.107px;">Basket</span>
<svg class="a" style="left:1450px;top:83px" width="16" height="16" viewBox="0 0 16 16"><path d="M1.500 5.500 Q1.500 1 6.500 .8 Q10 1.200 11.500 4 L10 4.500 Q8.500 7.500 5.500 8.500 L5.500 13 L8 14.500 L9.500 11 L5 9 Q2.500 8 1.500 5.500Z" fill="#74a818"/><path d="M3 5 Q4 2.500 7 3" stroke="#c4e498" stroke-width="1.300" fill="none"/><path d="M.5 9.500 L4.500 8.300 L5.500 10 L.5 10.300Z" fill="#6ca010"/><rect x="1.200" y="10.600" width="4" height="2.700" fill="#f00c10"/><rect x="2" y="11.500" width="2.200" height=".9" fill="#ffc8c8"/><circle cx="7.800" cy="8.300" r="2.600" fill="#f00c10"/><circle cx="12.700" cy="12.800" r="2.700" fill="#f00c10"/><path d="M12.800 6.300 L8.300 14.500" stroke="#f00c10" stroke-width="2.700"/><circle cx="7.800" cy="8.300" r=".8" fill="#e85050"/><circle cx="12.700" cy="12.800" r=".8" fill="#e85050"/></svg>
<span class="t" style="left:1433px;top:101px;letter-spacing:-0.08px;">Nett Price</span>
<div class="a" style="left:1490px;top:82px;width:1px;height:32px;background:#848284"></div>
<div class="a" style="left:1491px;top:82px;width:1px;height:32px;background:#fff"></div>
<svg class="a" style="left:1514px;top:83px" width="17" height="16" viewBox="0 0 17 16"><defs><linearGradient id="cg" x1="0" y1="0" x2=".6" y2="1"><stop offset="0" stop-color="#2c60a8"/><stop offset=".6" stop-color="#3c8cd8"/><stop offset="1" stop-color="#60e0f4"/></linearGradient></defs><path d="M1 1.500 L4.500 4 M12.500 12 L16 14.500" stroke="#80501c" stroke-width="2.600"/><circle cx="8.500" cy="8" r="5.900" fill="#e4eaf0" stroke="url(#cg)" stroke-width="1.500"/><circle cx="8.500" cy="7.600" r="3.900" fill="#f4f8fc"/><path d="M5 4 L9.900 7 L7.500 9.300Z" fill="#2c84ec"/><path d="M12.300 12 L7.500 9.300 L9.900 7Z" fill="#f02818"/></svg>
<span class="t" style="left:1499px;top:101px;letter-spacing:0.072px;">Navigate</span>
<svg class="a" style="left:1561px;top:85px" width="13" height="12" viewBox="0 0 13 12"><defs><radialGradient id="rx2" cx=".5" cy=".45" r=".6"><stop offset="0" stop-color="#f87880"/><stop offset=".6" stop-color="#f04858"/><stop offset="1" stop-color="#dc2038"/></radialGradient></defs><path d="M.8 2.200 L2.800 .4 L6.500 3.800 L10.200 .4 L12.200 2.200 L8.700 6 L12.200 9.800 L10.200 11.600 L6.500 8.200 L2.800 11.600 L.8 9.800 L4.300 6Z" fill="url(#rx2)" stroke="#d42030" stroke-width=".7" stroke-linejoin="round"/></svg>
<span class="t" style="left:1553px;top:101px;letter-spacing:-0.225px;">Close</span>
<span class="t" style="left:216px;top:136px;letter-spacing:0.544px;font-weight:bold;">Search results: 50/50</span>
<span class="t" style="left:222px;top:783px;letter-spacing:0.036px;">First portion: 9.3 sec, total search time: 23.8 sec</span>
<div class="a" style="left:1560px;top:778px;width:23px;height:22px;background:#d4d0c8;border:1px solid;border-color:#fff #404040 #404040 #fff;box-shadow:inset -1px -1px 0 #848284"></div>
<span class="t" style="left:1569px;top:781px;letter-spacing:-0.2px;color:#0a48a0;font-family:'Liberation Serif',serif;font-weight:bold;font-size:17px;line-height:17px;height:17px">i</span>
<div class="a" style="left:215px;top:805px;width:1378px;height:1px;background:#848284"></div>
<div class="a" style="left:215px;top:806px;width:52px;height:17px;background:#d4d0c8;"></div>
<div class="a" style="left:267px;top:806px;width:1px;height:17px;background:#848284"></div>
<span class="t" style="left:218px;top:808px;letter-spacing:-0.38px;color:#000;">Summary</span>
<div class="a" style="left:268px;top:806px;width:40px;height:17px;background:#d4d0c8;"></div>
<div class="a" style="left:308px;top:806px;width:1px;height:17px;background:#848284"></div>
<span class="t" style="left:270px;top:808px;letter-spacing:-0.227px;color:#000;">Search</span>
<div class="a" style="left:309px;top:806px;width:66px;height:17px;background:#ccffc4;"></div>
<div class="a" style="left:375px;top:806px;width:1px;height:17px;background:#848284"></div>
<span class="t" style="left:311px;top:808px;letter-spacing:-0.347px;color:#000;">Acc 3A MCO</span>
<div class="a" style="left:376px;top:806px;width:113px;height:17px;background:#ccffc4;"></div>
<div class="a" style="left:489px;top:806px;width:1px;height:17px;background:#848284"></div>
<span class="t" style="left:378px;top:808px;letter-spacing:-0.059px;color:#000;">Car MCO; 06/08/2017</span>
<div class="a" style="left:490px;top:806px;width:146px;height:17px;background:#c0c0ff;"></div>
<div class="a" style="left:636px;top:806px;width:1px;height:17px;background:#848284"></div>
<span class="t" style="left:492px;top:808px;letter-spacing:-0.074px;color:#000;">Acc 2A,1C MCO; 21/08/2018</span>
<div class="a" style="left:637px;top:806px;width:113px;height:17px;background:#c0c0ff;"></div>
<div class="a" style="left:750px;top:806px;width:1px;height:17px;background:#848284"></div>
<span class="t" style="left:639px;top:808px;letter-spacing:-0.059px;color:#000;">Car MCO; 21/08/2018</span>
<div class="a" style="left:751px;top:806px;width:145px;height:17px;background:#088008;border-radius:2px;"></div>
<span class="t" style="left:753px;top:808px;letter-spacing:-0.114px;color:#fff;">Acc 2A,1C MCO; 10/08/2017</span>
<div class="a" style="left:897px;top:806px;width:113px;height:17px;background:#ccffc4;"></div>
<div class="a" style="left:1010px;top:806px;width:1px;height:17px;background:#848284"></div>
<span class="t" style="left:899px;top:808px;letter-spacing:-0.059px;color:#000;">Car MCO; 10/08/2017</span>
<div class="a" style="left:1011px;top:806px;width:95px;height:17px;background:#d4d0c8;"></div>
<div class="a" style="left:1106px;top:806px;width:1px;height:17px;background:#848284"></div>
<span class="t" style="left:1013px;top:808px;letter-spacing:-0.332px;color:#000;">Financial Summary</span>
<span class="t" style="left:805px;top:832px;letter-spacing:-0.178px;">User: 446 - Clark Silk</span>
<span class="t" style="left:915px;top:832px;letter-spacing:-0.077px;">Retailer: 'Ocean-Florida'</span>
<span class="t" style="left:1042px;top:832px;letter-spacing:-0.06px;">Client: none</span>
<span class="t" style="right:8px;top:832px;letter-spacing:-0.337px;">19:28 GMT</span>
<div class="a" style="left:0px;top:857px;width:1600px;height:1px;background:#8c8a86"></div>
<div class="a" style="left:0px;top:858px;width:1600px;height:2px;background:#404040"></div>
<div class="tbl">
<div class="hc" style="left:3px;width:74px"><span style="letter-spacing:-0.068px;">Resort</span></div><i class="hs" style="left:77px"></i>
<div class="hc" style="left:78px;width:119px"><span style="letter-spacing:-0.298px;">Accommodation</span><svg class="a" style="left:103px;top:2px" width="13" height="10" viewBox="0 0 13 10"><defs><linearGradient id="fg" x1="0" x2="1"><stop offset="0" stop-color="#fff"/><stop offset="1" stop-color="#8ab0e0"/></linearGradient></defs><path d="M.5 .5H12.500V1.500L7.500 6.500V9.500H5.500V6.500L.5 1.500Z" fill="url(#fg)" stroke="#000"/></svg></div><i class="hs" style="left:197px"></i>
<div class="hc" style="left:198px;width:39px"><span style="letter-spacing:-0.113px;">Rati…</span></div><i class="hs" style="left:237px"></i>
<div class="hc" style="left:238px;width:74px"><span style="letter-spacing:-0.072px;">Board</span></div><i class="hs" style="left:312px"></i>
<div class="hc" style="left:313px;width:89px"><span style="letter-spacing:-0.078px;">Room type</span></div><i class="hs" style="left:402px"></i>
<div class="hc" style="left:403px;width:34px"><span style="transform:scaleX(0.930);transform-origin:0 0;">DOW</span></div><i class="hs" style="left:437px"></i>
<div class="hc" style="left:438px;width:67px"><span style="letter-spacing:-0.178px;">Check In</span></div><i class="hs" style="left:505px"></i>
<div class="hc" style="left:506px;width:34px"><span style="transform:scaleX(0.930);transform-origin:0 0;">DOW</span></div><i class="hs" style="left:540px"></i>
<div class="hc" style="left:541px;width:67px"><span style="letter-spacing:-0.135px;">Check Out</span></div><i class="hs" style="left:608px"></i>
<div class="hc" style="left:609px;width:61px"><span style="letter-spacing:-0.232px;">Supplier</span></div><i class="hs" style="left:670px"></i>
<div class="hc c" style="left:671px;width:24px"><span style="letter-spacing:-0.375px;">Er</span></div><i class="hs" style="left:695px"></i>
<div class="hc c" style="left:696px;width:24px"><span style="transform:scaleX(0.897);transform-origin:0 0;">NR</span></div><i class="hs" style="left:720px"></i>
<div class="hc c" style="left:721px;width:24px"><span style="transform:scaleX(0.894);transform-origin:0 0;">MS</span></div><i class="hs" style="left:745px"></i>
<div class="hc r" style="left:746px;width:54px"><span style="letter-spacing:-0.312px;">Price</span></div><i class="hs" style="left:800px"></i>
<div class="hc r" style="left:801px;width:54px"><span style="letter-spacing:-0.183px;">Incl.Fl.PP</span></div><i class="hs" style="left:855px"></i>
<div class="hc r" style="left:856px;width:64px"><span style="letter-spacing:-0.107px;right:11px;">Basket</span><svg class="a" style="right:2px;top:5px" width="7" height="4" viewBox="0 0 7 4"><path d="M0 0h7l-3.5 4z" fill="#9a9890"/></svg></div><i class="hs" style="left:920px"></i>
<div class="hc r" style="left:921px;width:54px"><span style="letter-spacing:-0.162px;">Discount</span></div><i class="hs" style="left:975px"></i>
<div class="hc c" style="left:976px;width:24px"><span style="letter-spacing:0.312px;">Of</span></div><i class="hs" style="left:1000px"></i>
<div class="hc" style="left:1001px;width:59px"><span style="letter-spacing:0.115px;">Contract</span></div><i class="hs" style="left:1060px"></i>
<div class="hc" style="left:1061px;width:74px"><span style="letter-spacing:-0.106px;">Act. Supplier</span></div><i class="hs" style="left:1135px"></i>
<div class="hc" style="left:1136px;width:219px"></div>
<div class="row" style="top:21px">
<span style="left:1px;width:73px;letter-spacing:-0.247px;">Lake Buena…</span>
<span style="left:76px;width:118px;letter-spacing:-0.312px;">Blue Tree Resort @ LBV</span>
<span style="left:196px;width:38px;letter-spacing:0.234px;">3.5</span>
<span style="left:236px;width:73px;letter-spacing:-0.309px;">Room Only</span>
<span style="left:311px;width:88px;letter-spacing:-0.255px;">1 Bedroom Suit…</span>
<span style="left:401px;width:33px;letter-spacing:-0.323px;">Thu</span>
<span style="left:436px;width:66px;letter-spacing:0.069px;">10/08/2017</span>
<span style="left:504px;width:33px;letter-spacing:-0.323px;">Thu</span>
<span style="left:539px;width:66px;letter-spacing:0.144px;">24/08/2017</span>
<span style="left:607px;width:60px;letter-spacing:-0.227px;">Ocean B…</span>
<span class="r" style="left:743px;width:51px;">822.04</span>
<span class="r" style="left:798px;width:51px;">274.01</span>
<span class="r" style="left:853px;width:61px;">822.04</span>
<span class="r" style="left:918px;width:51px;letter-spacing:0.27px;">0.00</span>
<span style="left:999px;width:58px;transform:scaleX(0.840);transform-origin:0 0;">XML</span>
</div>
<i class="hl" style="top:35px"></i>
<div class="row" style="top:36px">
<span style="left:1px;width:73px;letter-spacing:-0.247px;">Lake Buena…</span>
<span style="left:76px;width:118px;letter-spacing:-0.128px;">Blue Tree Resort</span>
<span style="left:196px;width:38px;letter-spacing:-0.123px;">4 Stars</span>
<span style="left:236px;width:73px;letter-spacing:-0.084px;">Self Catering</span>
<span style="left:311px;width:88px;letter-spacing:0.04px;">Apartment On…</span>
<span style="left:401px;width:33px;letter-spacing:-0.323px;">Thu</span>
<span style="left:436px;width:66px;letter-spacing:0.069px;">10/08/2017</span>
<span style="left:504px;width:33px;letter-spacing:-0.323px;">Thu</span>
<span style="left:539px;width:66px;letter-spacing:0.144px;">24/08/2017</span>
<span style="left:607px;width:60px;letter-spacing:-0.116px;">Hotelbeds</span>
<span class="r" style="left:743px;width:51px;">874.84</span>
<span class="r" style="left:798px;width:51px;">291.61</span>
<span class="r" style="left:853px;width:61px;">874.84</span>
<span class="r" style="left:918px;width:51px;letter-spacing:0.27px;">0.00</span>
<span style="left:999px;width:58px;transform:scaleX(0.840);transform-origin:0 0;">XML</span>
</div>
<i class="hl" style="top:50px"></i>
<div class="row" style="top:51px">
<span style="left:1px;width:73px;letter-spacing:-0.247px;">Lake Buena…</span>
<span style="left:76px;width:118px;letter-spacing:-0.312px;">Blue Tree Resort @ LBV</span>
<span style="left:196px;width:38px;letter-spacing:0.234px;">3.5</span>
<span style="left:236px;width:73px;letter-spacing:-0.309px;">Room Only</span>
<span style="left:311px;width:88px;letter-spacing:-0.255px;">1 Bedroom Suit…</span>
<span style="left:401px;width:33px;letter-spacing:-0.323px;">Thu</span>
<span style="left:436px;width:66px;letter-spacing:0.069px;">10/08/2017</span>
<span style="left:504px;width:33px;letter-spacing:-0.323px;">Thu</span>
<span style="left:539px;width:66px;letter-spacing:0.144px;">24/08/2017</span>
<span style="left:607px;width:60px;letter-spacing:-0.227px;">Ocean B…</span>
<span class="r" style="left:743px;width:51px;">876.84</span>
<span class="r" style="left:798px;width:51px;">292.28</span>
<span class="r" style="left:853px;width:61px;">876.84</span>
<span class="r" style="left:918px;width:51px;letter-spacing:0.27px;">0.00</span>
<span style="left:999px;width:58px;transform:scaleX(0.840);transform-origin:0 0;">XML</span>
</div>
<i class="hl" style="top:65px"></i>
<div class="row sel" style="top:66px">
<span style="left:1px;width:73px;letter-spacing:-0.247px;">Lake Buena…</span>
<span style="left:76px;width:118px;letter-spacing:-0.312px;">Blue Tree Resort @ LBV</span>
<span style="left:196px;width:38px;letter-spacing:0.234px;">3.5</span>
<span style="left:236px;width:73px;letter-spacing:-0.309px;">Room Only</span>
<span style="left:311px;width:88px;letter-spacing:-0.255px;">2 Bedroom Suit…</span>
<span style="left:401px;width:33px;letter-spacing:-0.323px;">Thu</span>
<span style="left:436px;width:66px;letter-spacing:0.069px;">10/08/2017</span>
<span style="left:504px;width:33px;letter-spacing:-0.323px;">Thu</span>
<span style="left:539px;width:66px;letter-spacing:0.144px;">24/08/2017</span>
<span style="left:607px;width:60px;letter-spacing:-0.227px;">Ocean B…</span>
<span class="r" style="left:743px;width:51px;">913.53</span>
<span class="r" style="left:798px;width:51px;">304.51</span>
<span class="r" style="left:853px;width:61px;">913.53</span>
<span class="r" style="left:918px;width:51px;letter-spacing:0.27px;">0.00</span>
<span style="left:999px;width:58px;transform:scaleX(0.840);transform-origin:0 0;">XML</span>
</div>
<i class="hl" style="top:80px"></i>
<div class="row" style="top:81px">
<span style="left:1px;width:73px;letter-spacing:-0.247px;">Lake Buena…</span>
<span style="left:76px;width:118px;letter-spacing:-0.128px;">Blue Tree Resort</span>
<span style="left:196px;width:38px;letter-spacing:0.468px;">3.0</span>
<span style="left:236px;width:73px;letter-spacing:-0.309px;">Room Only</span>
<span style="left:311px;width:88px;letter-spacing:-0.092px;">Executive 1 Be…</span>
<span style="left:401px;width:33px;letter-spacing:-0.323px;">Thu</span>
<span style="left:436px;width:66px;letter-spacing:0.069px;">10/08/2017</span>
<span style="left:504px;width:33px;letter-spacing:-0.323px;">Thu</span>
<span style="left:539px;width:66px;letter-spacing:0.144px;">24/08/2017</span>
<span style="left:607px;width:60px;letter-spacing:-0.116px;">Get A Bed</span>
<svg class="a" style="left:677px;top:2px" width="5" height="5" viewBox="0 0 5 5" shape-rendering="crispEdges"><path d="M2 0h1v5h-1zM0 1h1v1h-1zM4 1h1v1h-1zM1 2h3v1h-3zM0 3h1v1h-1zM4 3h1v1h-1z" fill="#000"/></svg>
<span class="r" style="left:743px;width:51px;">921.91</span>
<span class="r" style="left:798px;width:51px;">307.30</span>
<span class="r" style="left:853px;width:61px;">921.91</span>
<span class="r" style="left:918px;width:51px;letter-spacing:0.27px;">0.00</span>
<span style="left:999px;width:58px;transform:scaleX(0.840);transform-origin:0 0;">XML</span>
</div>
<i class="hl" style="top:95px"></i>
<div class="row" style="top:96px">
<span style="left:1px;width:73px;letter-spacing:-0.247px;">Lake Buena…</span>
<span style="left:76px;width:118px;letter-spacing:-0.312px;">Blue Tree Resort @ LBV</span>
<span style="left:196px;width:38px;letter-spacing:0.234px;">3.5</span>
<span style="left:236px;width:73px;letter-spacing:-0.309px;">Room Only</span>
<span style="left:311px;width:88px;letter-spacing:-0.255px;">2 Bedroom Suit…</span>
<span style="left:401px;width:33px;letter-spacing:-0.323px;">Thu</span>
<span style="left:436px;width:66px;letter-spacing:0.069px;">10/08/2017</span>
<span style="left:504px;width:33px;letter-spacing:-0.323px;">Thu</span>
<span style="left:539px;width:66px;letter-spacing:0.144px;">24/08/2017</span>
<span style="left:607px;width:60px;letter-spacing:-0.227px;">Ocean B…</span>
<span class="r" style="left:743px;width:51px;">974.43</span>
<span class="r" style="left:798px;width:51px;">324.81</span>
<span class="r" style="left:853px;width:61px;">974.43</span>
<span class="r" style="left:918px;width:51px;letter-spacing:0.27px;">0.00</span>
<span style="left:999px;width:58px;transform:scaleX(0.840);transform-origin:0 0;">XML</span>
</div>
<i class="hl" style="top:110px"></i>
<div class="row" style="top:111px">
<span style="left:1px;width:73px;letter-spacing:-0.247px;">Lake Buena…</span>
<span style="left:76px;width:118px;letter-spacing:-0.128px;">Blue Tree Resort</span>
<span style="left:196px;width:38px;letter-spacing:-0.123px;">4 Stars</span>
<span style="left:236px;width:73px;letter-spacing:-0.084px;">Self Catering</span>
<span style="left:311px;width:88px;letter-spacing:-0.2px;">Apartment Tw…</span>
<span style="left:401px;width:33px;letter-spacing:-0.323px;">Thu</span>
<span style="left:436px;width:66px;letter-spacing:0.069px;">10/08/2017</span>
<span style="left:504px;width:33px;letter-spacing:-0.323px;">Thu</span>
<span style="left:539px;width:66px;letter-spacing:0.144px;">24/08/2017</span>
<span style="left:607px;width:60px;letter-spacing:-0.116px;">Hotelbeds</span>
<span class="r" style="left:743px;width:51px;">978.65</span>
<span class="r" style="left:798px;width:51px;">326.22</span>
<span class="r" style="left:853px;width:61px;">978.65</span>
<span class="r" style="left:918px;width:51px;letter-spacing:0.27px;">0.00</span>
<span style="left:999px;width:58px;transform:scaleX(0.840);transform-origin:0 0;">XML</span>
</div>
<i class="hl" style="top:125px"></i>
<div class="row" style="top:126px">
<span style="left:1px;width:73px;letter-spacing:-0.247px;">Lake Buena…</span>
<span style="left:76px;width:118px;letter-spacing:-0.128px;">Blue Tree Resort</span>
<span style="left:196px;width:38px;letter-spacing:0.468px;">3.0</span>
<span style="left:236px;width:73px;letter-spacing:-0.309px;">Room Only</span>
<span style="left:311px;width:88px;letter-spacing:-0.092px;">Executive 1 Be…</span>
<span style="left:401px;width:33px;letter-spacing:-0.323px;">Thu</span>
<span style="left:436px;width:66px;letter-spacing:0.069px;">10/08/2017</span>
<span style="left:504px;width:33px;letter-spacing:-0.323px;">Thu</span>
<span style="left:539px;width:66px;letter-spacing:0.144px;">24/08/2017</span>
<span style="left:607px;width:60px;letter-spacing:-0.116px;">Get A Bed</span>
<svg class="a" style="left:677px;top:2px" width="5" height="5" viewBox="0 0 5 5" shape-rendering="crispEdges"><path d="M2 0h1v5h-1zM0 1h1v1h-1zM4 1h1v1h-1zM1 2h3v1h-3zM0 3h1v1h-1zM4 3h1v1h-1z" fill="#000"/></svg>
<svg class="a" style="left:702px;top:2px" width="5" height="5" viewBox="0 0 5 5" shape-rendering="crispEdges"><path d="M2 0h1v5h-1zM0 1h1v1h-1zM4 1h1v1h-1zM1 2h3v1h-3zM0 3h1v1h-1zM4 3h1v1h-1z" fill="#000"/></svg>
<span class="r" style="left:743px;width:51px;">984.90</span>
<span class="r" style="left:798px;width:51px;">328.30</span>
<span class="r" style="left:853px;width:61px;">984.90</span>
<span class="r" style="left:918px;width:51px;letter-spacing:0.27px;">0.00</span>
<span style="left:999px;width:58px;transform:scaleX(0.840);transform-origin:0 0;">XML</span>
</div>
<i class="hl" style="top:140px"></i>
<div class="row" style="top:141px">
<span style="left:1px;width:73px;letter-spacing:-0.247px;">Lake Buena…</span>
<span style="left:76px;width:118px;letter-spacing:-0.2px;">Blue Tree Resort at L…</span>
<span style="left:196px;width:38px;letter-spacing:1.297px;">3*</span>
<span style="left:236px;width:73px;letter-spacing:-0.216px;">Roomonly</span>
<span style="left:311px;width:88px;letter-spacing:-0.2px;">Suite, 1 Bedro…</span>
<span style="left:401px;width:33px;letter-spacing:-0.323px;">Thu</span>
<span style="left:436px;width:66px;letter-spacing:0.069px;">10/08/2017</span>
<span style="left:504px;width:33px;letter-spacing:-0.323px;">Thu</span>
<span style="left:539px;width:66px;letter-spacing:0.144px;">24/08/2017</span>
<span style="left:607px;width:60px;letter-spacing:0.052px;">Tourico …</span>
<span class="r" style="left:743px;width:51px;">988.38</span>
<span class="r" style="left:798px;width:51px;">329.46</span>
<span class="r" style="left:853px;width:61px;">988.38</span>
<span class="r" style="left:918px;width:51px;letter-spacing:0.27px;">0.00</span>
<span style="left:999px;width:58px;transform:scaleX(0.840);transform-origin:0 0;">XML</span>
</div>
<i class="hl" style="top:155px"></i>
<div class="row" style="top:156px">
<span style="left:1px;width:73px;letter-spacing:-0.247px;">Lake Buena…</span>
<span style="left:76px;width:118px;letter-spacing:-0.128px;">Blue Tree Resort</span>
<span style="left:196px;width:38px;letter-spacing:0.468px;">3.0</span>
<span style="left:236px;width:73px;letter-spacing:-0.309px;">Room Only</span>
<span style="left:311px;width:88px;letter-spacing:-0.092px;">Executive 2 Be…</span>
<span style="left:401px;width:33px;letter-spacing:-0.323px;">Thu</span>
<span style="left:436px;width:66px;letter-spacing:0.069px;">10/08/2017</span>
<span style="left:504px;width:33px;letter-spacing:-0.323px;">Thu</span>
<span style="left:539px;width:66px;letter-spacing:0.144px;">24/08/2017</span>
<span style="left:607px;width:60px;letter-spacing:-0.116px;">Get A Bed</span>
<svg class="a" style="left:677px;top:2px" width="5" height="5" viewBox="0 0 5 5" shape-rendering="crispEdges"><path d="M2 0h1v5h-1zM0 1h1v1h-1zM4 1h1v1h-1zM1 2h3v1h-3zM0 3h1v1h-1zM4 3h1v1h-1z" fill="#000"/></svg>
<span class="r" style="left:743px;width:51px;">1,030.53</span>
<span class="r" style="left:798px;width:51px;">343.51</span>
<span class="r" style="left:853px;width:61px;">1,030.53</span>
<span class="r" style="left:918px;width:51px;letter-spacing:0.27px;">0.00</span>
<span style="left:999px;width:58px;transform:scaleX(0.840);transform-origin:0 0;">XML</span>
</div>
<i class="hl" style="top:170px"></i>
<div class="row" style="top:171px">
<span style="left:1px;width:73px;letter-spacing:-0.247px;">Lake Buena…</span>
<span style="left:76px;width:118px;letter-spacing:-0.312px;">Blue Tree Resort @ LBV</span>
<span style="left:196px;width:38px;letter-spacing:0.234px;">3.5</span>
<span style="left:236px;width:73px;letter-spacing:-0.309px;">Room Only</span>
<span style="left:311px;width:88px;letter-spacing:-0.255px;">1 Bedroom Suit…</span>
<span style="left:401px;width:33px;letter-spacing:-0.323px;">Thu</span>
<span style="left:436px;width:66px;letter-spacing:0.069px;">10/08/2017</span>
<span style="left:504px;width:33px;letter-spacing:-0.323px;">Thu</span>
<span style="left:539px;width:66px;letter-spacing:0.144px;">24/08/2017</span>
<span style="left:607px;width:60px;letter-spacing:-0.227px;">Ocean B…</span>
<span class="r" style="left:743px;width:51px;">1,096.05</span>
<span class="r" style="left:798px;width:51px;">365.35</span>
<span class="r" style="left:853px;width:61px;">1,096.05</span>
<span class="r" style="left:918px;width:51px;letter-spacing:0.27px;">0.00</span>
<span style="left:999px;width:58px;transform:scaleX(0.840);transform-origin:0 0;">XML</span>
</div>
<i class="hl" style="top:185px"></i>
<div class="row" style="top:186px">
<span style="left:1px;width:73px;letter-spacing:-0.247px;">Lake Buena…</span>
<span style="left:76px;width:118px;letter-spacing:-0.2px;">Blue Tree Resort at L…</span>
<span style="left:196px;width:38px;letter-spacing:1.297px;">3*</span>
<span style="left:236px;width:73px;letter-spacing:-0.216px;">Roomonly</span>
<span style="left:311px;width:88px;letter-spacing:-0.2px;">Suite, 2 Bedro…</span>
<span style="left:401px;width:33px;letter-spacing:-0.323px;">Thu</span>
<span style="left:436px;width:66px;letter-spacing:0.069px;">10/08/2017</span>
<span style="left:504px;width:33px;letter-spacing:-0.323px;">Thu</span>
<span style="left:539px;width:66px;letter-spacing:0.144px;">24/08/2017</span>
<span style="left:607px;width:60px;letter-spacing:0.052px;">Tourico …</span>
<span class="r" style="left:743px;width:51px;">1,098.32</span>
<span class="r" style="left:798px;width:51px;">366.11</span>
<span class="r" style="left:853px;width:61px;">1,098.32</span>
<span class="r" style="left:918px;width:51px;letter-spacing:0.27px;">0.00</span>
<span style="left:999px;width:58px;transform:scaleX(0.840);transform-origin:0 0;">XML</span>
</div>
<i class="hl" style="top:200px"></i>
<div class="row" style="top:201px">
<span style="left:1px;width:73px;letter-spacing:-0.247px;">Lake Buena…</span>
<span style="left:76px;width:118px;letter-spacing:-0.128px;">Blue Tree Resort</span>
<span style="left:196px;width:38px;letter-spacing:0.468px;">3.0</span>
<span style="left:236px;width:73px;letter-spacing:-0.309px;">Room Only</span>
<span style="left:311px;width:88px;letter-spacing:-0.092px;">Executive 2 Be…</span>
<span style="left:401px;width:33px;letter-spacing:-0.323px;">Thu</span>
<span style="left:436px;width:66px;letter-spacing:0.069px;">10/08/2017</span>
<span style="left:504px;width:33px;letter-spacing:-0.323px;">Thu</span>
<span style="left:539px;width:66px;letter-spacing:0.144px;">24/08/2017</span>
<span style="left:607px;width:60px;letter-spacing:-0.116px;">Get A Bed</span>
<svg class="a" style="left:677px;top:2px" width="5" height="5" viewBox="0 0 5 5" shape-rendering="crispEdges"><path d="M2 0h1v5h-1zM0 1h1v1h-1zM4 1h1v1h-1zM1 2h3v1h-3zM0 3h1v1h-1zM4 3h1v1h-1z" fill="#000"/></svg>
<svg class="a" style="left:702px;top:2px" width="5" height="5" viewBox="0 0 5 5" shape-rendering="crispEdges"><path d="M2 0h1v5h-1zM0 1h1v1h-1zM4 1h1v1h-1zM1 2h3v1h-3zM0 3h1v1h-1zM4 3h1v1h-1z" fill="#000"/></svg>
<span class="r" style="left:743px;width:51px;">1,103.56</span>
<span class="r" style="left:798px;width:51px;">367.85</span>
<span class="r" style="left:853px;width:61px;">1,103.56</span>
<span class="r" style="left:918px;width:51px;letter-spacing:0.27px;">0.00</span>
<span style="left:999px;width:58px;transform:scaleX(0.840);transform-origin:0 0;">XML</span>
</div>
<i class="hl" style="top:215px"></i>
<div class="row" style="top:216px">
<span style="left:1px;width:73px;letter-spacing:-0.247px;">Lake Buena…</span>
<span style="left:76px;width:118px;letter-spacing:-0.27px;">Blue Heron Beach Re…</span>
<span style="left:196px;width:38px;letter-spacing:0.084px;">4 St…</span>
<span style="left:236px;width:73px;letter-spacing:-0.084px;">Self Catering</span>
<span style="left:311px;width:88px;letter-spacing:0.04px;">Apartment On…</span>
<span style="left:401px;width:33px;letter-spacing:-0.323px;">Thu</span>
<span style="left:436px;width:66px;letter-spacing:0.069px;">10/08/2017</span>
<span style="left:504px;width:33px;letter-spacing:-0.323px;">Thu</span>
<span style="left:539px;width:66px;letter-spacing:0.144px;">24/08/2017</span>
<span style="left:607px;width:60px;letter-spacing:-0.116px;">Hotelbeds</span>
<span class="r" style="left:743px;width:51px;">1,105.04</span>
<span class="r" style="left:798px;width:51px;">368.35</span>
<span class="r" style="left:853px;width:61px;">1,105.04</span>
<span class="r" style="left:918px;width:51px;letter-spacing:0.27px;">0.00</span>
<span style="left:999px;width:58px;transform:scaleX(0.840);transform-origin:0 0;">XML</span>
</div>
<i class="hl" style="top:230px"></i>
<div class="row" style="top:231px">
<span style="left:1px;width:73px;letter-spacing:0.118px;">Downtown …</span>
<span style="left:76px;width:118px;letter-spacing:-0.27px;">Blue Heron Beach Re…</span>
<span style="left:196px;width:38px;letter-spacing:1.297px;">4*</span>
<span style="left:236px;width:73px;letter-spacing:-0.216px;">Roomonly</span>
<span style="left:311px;width:88px;letter-spacing:-0.2px;">Standard, 1 Be…</span>
<span style="left:401px;width:33px;letter-spacing:-0.323px;">Thu</span>
<span style="left:436px;width:66px;letter-spacing:0.069px;">10/08/2017</span>
<span style="left:504px;width:33px;letter-spacing:-0.323px;">Thu</span>
<span style="left:539px;width:66px;letter-spacing:0.144px;">24/08/2017</span>
<span style="left:607px;width:60px;letter-spacing:0.052px;">Tourico …</span>
<span class="r" style="left:743px;width:51px;">1,127.78</span>
<span class="r" style="left:798px;width:51px;">375.93</span>
<span class="r" style="left:853px;width:61px;">1,127.78</span>
<span class="r" style="left:918px;width:51px;letter-spacing:0.27px;">0.00</span>
<span style="left:999px;width:58px;transform:scaleX(0.840);transform-origin:0 0;">XML</span>
</div>
<i class="hl" style="top:245px"></i>
<div class="row" style="top:246px">
<span style="left:1px;width:73px;letter-spacing:-0.113px;">Orlando (FL)</span>
<span style="left:76px;width:118px;letter-spacing:-0.128px;">Blue Tree Resort</span>
<span style="left:196px;width:38px;letter-spacing:0.106px;">3star</span>
<span style="left:236px;width:73px;letter-spacing:-0.309px;">Room Only</span>
<span style="left:311px;width:88px;letter-spacing:-0.2px;">One Bedroom …</span>
<span style="left:401px;width:33px;letter-spacing:-0.323px;">Thu</span>
<span style="left:436px;width:66px;letter-spacing:0.069px;">10/08/2017</span>
<span style="left:504px;width:33px;letter-spacing:-0.323px;">Thu</span>
<span style="left:539px;width:66px;letter-spacing:0.144px;">24/08/2017</span>
<span style="left:607px;width:60px;letter-spacing:-0.045px;">Bonotel</span>
<span class="r" style="left:743px;width:51px;">1,187.19</span>
<span class="r" style="left:798px;width:51px;">395.73</span>
<span class="r" style="left:853px;width:61px;">1,187.19</span>
<span class="r" style="left:918px;width:51px;letter-spacing:0.27px;">0.00</span>
<span style="left:999px;width:58px;transform:scaleX(0.840);transform-origin:0 0;">XML</span>
</div>
<i class="hl" style="top:260px"></i>
<div class="row" style="top:261px">
<span style="left:1px;width:73px;letter-spacing:-0.247px;">Lake Buena…</span>
<span style="left:76px;width:118px;letter-spacing:-0.312px;">Blue Tree Resort @ LBV</span>
<span style="left:196px;width:38px;letter-spacing:0.234px;">3.5</span>
<span style="left:236px;width:73px;letter-spacing:-0.309px;">Room Only</span>
<span style="left:311px;width:88px;letter-spacing:-0.255px;">2 Bedroom Suit…</span>
<span style="left:401px;width:33px;letter-spacing:-0.323px;">Thu</span>
<span style="left:436px;width:66px;letter-spacing:0.069px;">10/08/2017</span>
<span style="left:504px;width:33px;letter-spacing:-0.323px;">Thu</span>
<span style="left:539px;width:66px;letter-spacing:0.144px;">24/08/2017</span>
<span style="left:607px;width:60px;letter-spacing:-0.227px;">Ocean B…</span>
<span class="r" style="left:743px;width:51px;">1,218.04</span>
<span class="r" style="left:798px;width:51px;">406.01</span>
<span class="r" style="left:853px;width:61px;">1,218.04</span>
<span class="r" style="left:918px;width:51px;letter-spacing:0.27px;">0.00</span>
<span style="left:999px;width:58px;transform:scaleX(0.840);transform-origin:0 0;">XML</span>
</div>
<i class="hl" style="top:275px"></i>
<div class="row" style="top:276px">
<span style="left:1px;width:73px;letter-spacing:-0.247px;">Lake Buena…</span>
<span style="left:76px;width:118px;letter-spacing:-0.27px;">Blue Heron Beach Re…</span>
<span style="left:196px;width:38px;letter-spacing:0.468px;">3.0</span>
<span style="left:236px;width:73px;letter-spacing:-0.309px;">Room Only</span>
<span style="left:311px;width:88px;letter-spacing:-0.2px;">1 Bedroom - 2 …</span>
<span style="left:401px;width:33px;letter-spacing:-0.323px;">Thu</span>
<span style="left:436px;width:66px;letter-spacing:0.069px;">10/08/2017</span>
<span style="left:504px;width:33px;letter-spacing:-0.323px;">Thu</span>
<span style="left:539px;width:66px;letter-spacing:0.144px;">24/08/2017</span>
<span style="left:607px;width:60px;letter-spacing:-0.116px;">Get A Bed</span>
<span class="r" style="left:743px;width:51px;">1,238.89</span>
<span class="r" style="left:798px;width:51px;">412.96</span>
<span class="r" style="left:853px;width:61px;">1,238.89</span>
<span class="r" style="left:918px;width:51px;letter-spacing:0.27px;">0.00</span>
<span style="left:999px;width:58px;transform:scaleX(0.840);transform-origin:0 0;">XML</span>
</div>
<i class="hl" style="top:290px"></i>
<div class="row" style="top:291px">
<span style="left:1px;width:73px;letter-spacing:-0.247px;">Lake Buena…</span>
<span style="left:76px;width:118px;letter-spacing:-0.128px;">Blue Tree Resort</span>
<span style="left:196px;width:38px;letter-spacing:-0.123px;">4 Stars</span>
<span style="left:236px;width:73px;letter-spacing:-0.309px;">Room Only</span>
<span style="left:311px;width:88px;letter-spacing:-0.2px;">Triple 1 Bedroo…</span>
<span style="left:401px;width:33px;letter-spacing:-0.323px;">Thu</span>
<span style="left:436px;width:66px;letter-spacing:0.069px;">10/08/2017</span>
<span style="left:504px;width:33px;letter-spacing:-0.323px;">Thu</span>
<span style="left:539px;width:66px;letter-spacing:0.144px;">24/08/2017</span>
<span style="left:607px;width:60px;letter-spacing:-0.116px;">Hotelbeds</span>
<span class="r" style="left:743px;width:51px;">1,243.06</span>
<span class="r" style="left:798px;width:51px;">414.35</span>
<span class="r" style="left:853px;width:61px;">1,243.06</span>
<span class="r" style="left:918px;width:51px;letter-spacing:0.27px;">0.00</span>
<span style="left:999px;width:58px;transform:scaleX(0.840);transform-origin:0 0;">XML</span>
</div>
<i class="hl" style="top:305px"></i>
<div class="row" style="top:306px">
<span style="left:1px;width:73px;letter-spacing:-0.113px;">Orlando (FL)</span>
<span style="left:76px;width:118px;letter-spacing:-0.128px;">Blue Tree Resort</span>
<span style="left:196px;width:38px;letter-spacing:0.106px;">3star</span>
<span style="left:236px;width:73px;letter-spacing:-0.309px;">Room Only</span>
<span style="left:311px;width:88px;letter-spacing:-0.2px;">Two Bedroom …</span>
<span style="left:401px;width:33px;letter-spacing:-0.323px;">Thu</span>
<span style="left:436px;width:66px;letter-spacing:0.069px;">10/08/2017</span>
<span style="left:504px;width:33px;letter-spacing:-0.323px;">Thu</span>
<span style="left:539px;width:66px;letter-spacing:0.144px;">24/08/2017</span>
<span style="left:607px;width:60px;letter-spacing:-0.045px;">Bonotel</span>
<span class="r" style="left:743px;width:51px;">1,318.01</span>
<span class="r" style="left:798px;width:51px;">439.34</span>
<span class="r" style="left:853px;width:61px;">1,318.01</span>
<span class="r" style="left:918px;width:51px;letter-spacing:0.27px;">0.00</span>
<span style="left:999px;width:58px;transform:scaleX(0.840);transform-origin:0 0;">XML</span>
</div>
<i class="hl" style="top:320px"></i>
<div class="row" style="top:321px">
<span style="left:1px;width:73px;letter-spacing:0.118px;">Downtown …</span>
<span style="left:76px;width:118px;letter-spacing:-0.27px;">Blue Heron Beach Re…</span>
<span style="left:196px;width:38px;letter-spacing:1.297px;">4*</span>
<span style="left:236px;width:73px;letter-spacing:-0.216px;">Roomonly</span>
<span style="left:311px;width:88px;letter-spacing:-0.2px;">Standard, 2 Be…</span>
<span style="left:401px;width:33px;letter-spacing:-0.323px;">Thu</span>
<span style="left:436px;width:66px;letter-spacing:0.069px;">10/08/2017</span>
<span style="left:504px;width:33px;letter-spacing:-0.323px;">Thu</span>
<span style="left:539px;width:66px;letter-spacing:0.144px;">24/08/2017</span>
<span style="left:607px;width:60px;letter-spacing:0.052px;">Tourico …</span>
<span class="r" style="left:743px;width:51px;">1,349.64</span>
<span class="r" style="left:798px;width:51px;">449.88</span>
<span class="r" style="left:853px;width:61px;">1,349.64</span>
<span class="r" style="left:918px;width:51px;letter-spacing:0.27px;">0.00</span>
<span style="left:999px;width:58px;transform:scaleX(0.840);transform-origin:0 0;">XML</span>
</div>
<i class="hl" style="top:335px"></i>
<div class="row" style="top:336px">
<span style="left:1px;width:73px;letter-spacing:-0.247px;">Lake Buena…</span>
<span style="left:76px;width:118px;letter-spacing:-0.128px;">Blue Tree Resort</span>
<span style="left:196px;width:38px;letter-spacing:-0.123px;">4 Stars</span>
<span style="left:236px;width:73px;letter-spacing:-0.309px;">Room Only</span>
<span style="left:311px;width:88px;letter-spacing:-0.2px;">Triple Two Bed…</span>
<span style="left:401px;width:33px;letter-spacing:-0.323px;">Thu</span>
<span style="left:436px;width:66px;letter-spacing:0.069px;">10/08/2017</span>
<span style="left:504px;width:33px;letter-spacing:-0.323px;">Thu</span>
<span style="left:539px;width:66px;letter-spacing:0.144px;">24/08/2017</span>
<span style="left:607px;width:60px;letter-spacing:-0.116px;">Hotelbeds</span>
<span class="r" style="left:743px;width:51px;">1,380.00</span>
<span class="r" style="left:798px;width:51px;">460.00</span>
<span class="r" style="left:853px;width:61px;">1,380.00</span>
<span class="r" style="left:918px;width:51px;letter-spacing:0.27px;">0.00</span>
<span style="left:999px;width:58px;transform:scaleX(0.840);transform-origin:0 0;">XML</span>
</div>
<i class="hl" style="top:350px"></i>
<div class="row" style="top:351px">
<span style="left:1px;width:73px;letter-spacing:-0.247px;">Lake Buena…</span>
<span style="left:76px;width:118px;letter-spacing:-0.023px;">Westgate Blue Tree …</span>
<span style="left:196px;width:38px;letter-spacing:-0.123px;">4 Stars</span>
<span style="left:236px;width:73px;letter-spacing:-0.309px;">Room Only</span>
<span style="left:311px;width:88px;letter-spacing:-0.2px;">Triple Villa</span>
<span style="left:401px;width:33px;letter-spacing:-0.323px;">Thu</span>
<span style="left:436px;width:66px;letter-spacing:0.069px;">10/08/2017</span>
<span style="left:504px;width:33px;letter-spacing:-0.323px;">Thu</span>
<span style="left:539px;width:66px;letter-spacing:0.144px;">24/08/2017</span>
<span style="left:607px;width:60px;letter-spacing:-0.116px;">Hotelbeds</span>
<span class="r" style="left:743px;width:51px;">1,395.42</span>
<span class="r" style="left:798px;width:51px;">465.14</span>
<span class="r" style="left:853px;width:61px;">1,395.42</span>
<span class="r" style="left:918px;width:51px;letter-spacing:0.27px;">0.00</span>
<span style="left:999px;width:58px;transform:scaleX(0.840);transform-origin:0 0;">XML</span>
</div>
<i class="hl" style="top:365px"></i>
<div class="row" style="top:366px">
<span style="left:1px;width:73px;letter-spacing:-0.247px;">Lake Buena…</span>
<span style="left:76px;width:118px;letter-spacing:-0.023px;">Westgate Blue Tree …</span>
<span style="left:196px;width:38px;letter-spacing:0.234px;">3.5</span>
<span style="left:236px;width:73px;letter-spacing:-0.309px;">Room Only</span>
<span style="left:311px;width:88px;letter-spacing:-0.2px;">1 Bedroom</span>
<span style="left:401px;width:33px;letter-spacing:-0.323px;">Thu</span>
<span style="left:436px;width:66px;letter-spacing:0.069px;">10/08/2017</span>
<span style="left:504px;width:33px;letter-spacing:-0.323px;">Thu</span>
<span style="left:539px;width:66px;letter-spacing:0.144px;">24/08/2017</span>
<span style="left:607px;width:60px;letter-spacing:-0.227px;">Ocean B…</span>
<span class="r" style="left:743px;width:51px;">1,430.09</span>
<span class="r" style="left:798px;width:51px;">476.70</span>
<span class="r" style="left:853px;width:61px;">1,430.09</span>
<span class="r" style="left:918px;width:51px;letter-spacing:0.27px;">0.00</span>
<span style="left:999px;width:58px;transform:scaleX(0.840);transform-origin:0 0;">XML</span>
</div>
<i class="hl" style="top:380px"></i>
<div class="row" style="top:381px">
<span style="left:1px;width:73px;letter-spacing:-0.247px;">Lake Buena…</span>
<span style="left:76px;width:118px;letter-spacing:-0.023px;">Westgate Blue Tree …</span>
<span style="left:196px;width:38px;letter-spacing:0.234px;">3.5</span>
<span style="left:236px;width:73px;letter-spacing:-0.309px;">Room Only</span>
<span style="left:311px;width:88px;letter-spacing:-0.2px;">1 Bedroom (3 …</span>
<span style="left:401px;width:33px;letter-spacing:-0.323px;">Thu</span>
<span style="left:436px;width:66px;letter-spacing:0.069px;">10/08/2017</span>
<span style="left:504px;width:33px;letter-spacing:-0.323px;">Thu</span>
<span style="left:539px;width:66px;letter-spacing:0.144px;">24/08/2017</span>
<span style="left:607px;width:60px;letter-spacing:-0.227px;">Ocean B…</span>
<span class="r" style="left:743px;width:51px;">1,430.09</span>
<span class="r" style="left:798px;width:51px;">476.70</span>
<span class="r" style="left:853px;width:61px;">1,430.09</span>
<span class="r" style="left:918px;width:51px;letter-spacing:0.27px;">0.00</span>
<span style="left:999px;width:58px;transform:scaleX(0.840);transform-origin:0 0;">XML</span>
</div>
<i class="hl" style="top:395px"></i>
<div class="row" style="top:396px">
<span style="left:1px;width:73px;letter-spacing:-0.247px;">Lake Buena…</span>
<span style="left:76px;width:118px;letter-spacing:-0.27px;">Blue Heron Beach Re…</span>
<span style="left:196px;width:38px;letter-spacing:0.468px;">3.0</span>
<span style="left:236px;width:73px;letter-spacing:-0.309px;">Room Only</span>
<span style="left:311px;width:88px;letter-spacing:-0.2px;">2 Bedroom - 2 …</span>
<span style="left:401px;width:33px;letter-spacing:-0.323px;">Thu</span>
<span style="left:436px;width:66px;letter-spacing:0.069px;">10/08/2017</span>
<span style="left:504px;width:33px;letter-spacing:-0.323px;">Thu</span>
<span style="left:539px;width:66px;letter-spacing:0.144px;">24/08/2017</span>
<span style="left:607px;width:60px;letter-spacing:-0.116px;">Get A Bed</span>
<span class="r" style="left:743px;width:51px;">1,435.08</span>
<span class="r" style="left:798px;width:51px;">478.36</span>
<span class="r" style="left:853px;width:61px;">1,435.08</span>
<span class="r" style="left:918px;width:51px;letter-spacing:0.27px;">0.00</span>
<span style="left:999px;width:58px;transform:scaleX(0.840);transform-origin:0 0;">XML</span>
</div>
<i class="hl" style="top:410px"></i>
<div class="row" style="top:411px">
<span style="left:1px;width:73px;letter-spacing:-0.247px;">Lake Buena…</span>
<span style="left:76px;width:118px;letter-spacing:-0.023px;">Westgate Blue Tree …</span>
<span style="left:196px;width:38px;letter-spacing:0.468px;">3.0</span>
<span style="left:236px;width:73px;letter-spacing:-0.309px;">Room Only</span>
<span style="left:311px;width:88px;letter-spacing:-0.2px;">Triple Villa</span>
<span style="left:401px;width:33px;letter-spacing:-0.323px;">Thu</span>
<span style="left:436px;width:66px;letter-spacing:0.069px;">10/08/2017</span>
<span style="left:504px;width:33px;letter-spacing:-0.323px;">Thu</span>
<span style="left:539px;width:66px;letter-spacing:0.144px;">24/08/2017</span>
<span style="left:607px;width:60px;letter-spacing:-0.116px;">Get A Bed</span>
<svg class="a" style="left:677px;top:2px" width="5" height="5" viewBox="0 0 5 5" shape-rendering="crispEdges"><path d="M2 0h1v5h-1zM0 1h1v1h-1zM4 1h1v1h-1zM1 2h3v1h-3zM0 3h1v1h-1zM4 3h1v1h-1z" fill="#000"/></svg>
<span class="r" style="left:743px;width:51px;">1,503.93</span>
<span class="r" style="left:798px;width:51px;">501.31</span>
<span class="r" style="left:853px;width:61px;">1,503.93</span>
<span class="r" style="left:918px;width:51px;letter-spacing:0.27px;">0.00</span>
<span style="left:999px;width:58px;transform:scaleX(0.840);transform-origin:0 0;">XML</span>
</div>
<i class="hl" style="top:425px"></i>
<div class="row" style="top:426px">
<span style="left:1px;width:73px;letter-spacing:0.118px;">Downtown …</span>
<span style="left:76px;width:118px;letter-spacing:-0.023px;">Westgate Blue Tree …</span>
<span style="left:196px;width:38px;letter-spacing:1.297px;">4*</span>
<span style="left:236px;width:73px;letter-spacing:-0.216px;">Roomonly</span>
<span style="left:311px;width:88px;letter-spacing:-0.2px;">Standard, Leis…</span>
<span style="left:401px;width:33px;letter-spacing:-0.323px;">Thu</span>
<span style="left:436px;width:66px;letter-spacing:0.069px;">10/08/2017</span>
<span style="left:504px;width:33px;letter-spacing:-0.323px;">Thu</span>
<span style="left:539px;width:66px;letter-spacing:0.144px;">24/08/2017</span>
<span style="left:607px;width:60px;letter-spacing:0.052px;">Tourico …</span>
<svg class="a" style="left:677px;top:2px" width="5" height="5" viewBox="0 0 5 5" shape-rendering="crispEdges"><path d="M2 0h1v5h-1zM0 1h1v1h-1zM4 1h1v1h-1zM1 2h3v1h-3zM0 3h1v1h-1zM4 3h1v1h-1z" fill="#000"/></svg>
<span class="r" style="left:743px;width:51px;">1,509.57</span>
<span class="r" style="left:798px;width:51px;">503.19</span>
<span class="r" style="left:853px;width:61px;">1,509.57</span>
<span class="r" style="left:918px;width:51px;letter-spacing:0.27px;">0.00</span>
<span style="left:999px;width:58px;transform:scaleX(0.840);transform-origin:0 0;">XML</span>
</div>
<i class="hl" style="top:440px"></i>
<div class="row" style="top:441px">
<span style="left:1px;width:73px;letter-spacing:-0.247px;">Lake Buena…</span>
<span style="left:76px;width:118px;letter-spacing:-0.023px;">Westgate Blue Tree …</span>
<span style="left:196px;width:38px;letter-spacing:-0.123px;">4 Stars</span>
<span style="left:236px;width:73px;letter-spacing:-0.084px;">Self Catering</span>
<span style="left:311px;width:88px;letter-spacing:0.04px;">Apartment On…</span>
<span style="left:401px;width:33px;letter-spacing:-0.323px;">Thu</span>
<span style="left:436px;width:66px;letter-spacing:0.069px;">10/08/2017</span>
<span style="left:504px;width:33px;letter-spacing:-0.323px;">Thu</span>
<span style="left:539px;width:66px;letter-spacing:0.144px;">24/08/2017</span>
<span style="left:607px;width:60px;letter-spacing:-0.116px;">Hotelbeds</span>
<span class="r" style="left:743px;width:51px;">1,525.92</span>
<span class="r" style="left:798px;width:51px;">508.64</span>
<span class="r" style="left:853px;width:61px;">1,525.92</span>
<span class="r" style="left:918px;width:51px;letter-spacing:0.27px;">0.00</span>
<span style="left:999px;width:58px;transform:scaleX(0.840);transform-origin:0 0;">XML</span>
</div>
<i class="hl" style="top:455px"></i>
<div class="row" style="top:456px">
<span style="left:1px;width:73px;letter-spacing:-0.113px;">Orlando (FL)</span>
<span style="left:76px;width:118px;letter-spacing:-0.023px;">Westgate Blue Tree …</span>
<span style="left:196px;width:38px;letter-spacing:0.106px;">3star</span>
<span style="left:236px;width:73px;letter-spacing:-0.309px;">Room Only</span>
<span style="left:311px;width:88px;letter-spacing:-0.2px;">One Bedroom …</span>
<span style="left:401px;width:33px;letter-spacing:-0.323px;">Thu</span>
<span style="left:436px;width:66px;letter-spacing:0.069px;">10/08/2017</span>
<span style="left:504px;width:33px;letter-spacing:-0.323px;">Thu</span>
<span style="left:539px;width:66px;letter-spacing:0.144px;">24/08/2017</span>
<span style="left:607px;width:60px;letter-spacing:-0.045px;">Bonotel</span>
<span class="r" style="left:743px;width:51px;">1,551.85</span>
<span class="r" style="left:798px;width:51px;">517.28</span>
<span class="r" style="left:853px;width:61px;">1,551.85</span>
<span class="r" style="left:918px;width:51px;letter-spacing:0.27px;">0.00</span>
<span style="left:999px;width:58px;transform:scaleX(0.840);transform-origin:0 0;">XML</span>
</div>
<i class="hl" style="top:470px"></i>
<div class="row" style="top:471px">
<span style="left:1px;width:73px;letter-spacing:-0.247px;">Lake Buena…</span>
<span style="left:76px;width:118px;letter-spacing:-0.023px;">Westgate Blue Tree …</span>
<span style="left:196px;width:38px;letter-spacing:0.468px;">3.0</span>
<span style="left:236px;width:73px;letter-spacing:-0.309px;">Room Only</span>
<span style="left:311px;width:88px;letter-spacing:-0.2px;">Leisure 1 Bedr…</span>
<span style="left:401px;width:33px;letter-spacing:-0.323px;">Thu</span>
<span style="left:436px;width:66px;letter-spacing:0.069px;">10/08/2017</span>
<span style="left:504px;width:33px;letter-spacing:-0.323px;">Thu</span>
<span style="left:539px;width:66px;letter-spacing:0.144px;">24/08/2017</span>
<span style="left:607px;width:60px;letter-spacing:-0.116px;">Get A Bed</span>
<svg class="a" style="left:677px;top:2px" width="5" height="5" viewBox="0 0 5 5" shape-rendering="crispEdges"><path d="M2 0h1v5h-1zM0 1h1v1h-1zM4 1h1v1h-1zM1 2h3v1h-3zM0 3h1v1h-1zM4 3h1v1h-1z" fill="#000"/></svg>
<span class="r" style="left:743px;width:51px;">1,605.11</span>
<span class="r" style="left:798px;width:51px;">535.04</span>
<span class="r" style="left:853px;width:61px;">1,605.11</span>
<span class="r" style="left:918px;width:51px;letter-spacing:0.27px;">0.00</span>
<span style="left:999px;width:58px;transform:scaleX(0.840);transform-origin:0 0;">XML</span>
</div>
<i class="hl" style="top:485px"></i>
<div class="row" style="top:486px">
<span style="left:1px;width:73px;letter-spacing:0.118px;">Downtown …</span>
<span style="left:76px;width:118px;letter-spacing:-0.023px;">Westgate Blue Tree …</span>
<span style="left:196px;width:38px;letter-spacing:1.297px;">4*</span>
<span style="left:236px;width:73px;letter-spacing:-0.216px;">Roomonly</span>
<span style="left:311px;width:88px;letter-spacing:-0.2px;">Standard, 1 Be…</span>
<span style="left:401px;width:33px;letter-spacing:-0.323px;">Thu</span>
<span style="left:436px;width:66px;letter-spacing:0.069px;">10/08/2017</span>
<span style="left:504px;width:33px;letter-spacing:-0.323px;">Thu</span>
<span style="left:539px;width:66px;letter-spacing:0.144px;">24/08/2017</span>
<span style="left:607px;width:60px;letter-spacing:0.052px;">Tourico …</span>
<svg class="a" style="left:677px;top:2px" width="5" height="5" viewBox="0 0 5 5" shape-rendering="crispEdges"><path d="M2 0h1v5h-1zM0 1h1v1h-1zM4 1h1v1h-1zM1 2h3v1h-3zM0 3h1v1h-1zM4 3h1v1h-1z" fill="#000"/></svg>
<span class="r" style="left:743px;width:51px;">1,609.29</span>
<span class="r" style="left:798px;width:51px;">536.43</span>
<span class="r" style="left:853px;width:61px;">1,609.29</span>
<span class="r" style="left:918px;width:51px;letter-spacing:0.27px;">0.00</span>
<span style="left:999px;width:58px;transform:scaleX(0.840);transform-origin:0 0;">XML</span>
</div>
<i class="hl" style="top:500px"></i>
<div class="row" style="top:501px">
<span style="left:1px;width:73px;letter-spacing:-0.247px;">Lake Buena…</span>
<span style="left:76px;width:118px;letter-spacing:-0.023px;">Westgate Blue Tree …</span>
<span style="left:196px;width:38px;letter-spacing:0.468px;">3.0</span>
<span style="left:236px;width:73px;letter-spacing:-0.084px;">Self Catering</span>
<span style="left:311px;width:88px;letter-spacing:0.04px;">Apartment On…</span>
<span style="left:401px;width:33px;letter-spacing:-0.323px;">Thu</span>
<span style="left:436px;width:66px;letter-spacing:0.069px;">10/08/2017</span>
<span style="left:504px;width:33px;letter-spacing:-0.323px;">Thu</span>
<span style="left:539px;width:66px;letter-spacing:0.144px;">24/08/2017</span>
<span style="left:607px;width:60px;letter-spacing:-0.116px;">Get A Bed</span>
<svg class="a" style="left:677px;top:2px" width="5" height="5" viewBox="0 0 5 5" shape-rendering="crispEdges"><path d="M2 0h1v5h-1zM0 1h1v1h-1zM4 1h1v1h-1zM1 2h3v1h-3zM0 3h1v1h-1zM4 3h1v1h-1z" fill="#000"/></svg>
<span class="r" style="left:743px;width:51px;">1,644.68</span>
<span class="r" style="left:798px;width:51px;">548.23</span>
<span class="r" style="left:853px;width:61px;">1,644.68</span>
<span class="r" style="left:918px;width:51px;letter-spacing:0.27px;">0.00</span>
<span style="left:999px;width:58px;transform:scaleX(0.840);transform-origin:0 0;">XML</span>
</div>
<i class="hl" style="top:515px"></i>
<div class="row" style="top:516px">
<span style="left:1px;width:73px;letter-spacing:-0.247px;">Lake Buena…</span>
<span style="left:76px;width:118px;letter-spacing:-0.023px;">Westgate Blue Tree …</span>
<span style="left:196px;width:38px;letter-spacing:0.234px;">3.5</span>
<span style="left:236px;width:73px;letter-spacing:-0.309px;">Room Only</span>
<span style="left:311px;width:88px;letter-spacing:-0.2px;">2 Bedroom</span>
<span style="left:401px;width:33px;letter-spacing:-0.323px;">Thu</span>
<span style="left:436px;width:66px;letter-spacing:0.069px;">10/08/2017</span>
<span style="left:504px;width:33px;letter-spacing:-0.323px;">Thu</span>
<span style="left:539px;width:66px;letter-spacing:0.144px;">24/08/2017</span>
<span style="left:607px;width:60px;letter-spacing:-0.227px;">Ocean B…</span>
<span class="r" style="left:743px;width:51px;">1,676.99</span>
<span class="r" style="left:798px;width:51px;">559.00</span>
<span class="r" style="left:853px;width:61px;">1,676.99</span>
<span class="r" style="left:918px;width:51px;letter-spacing:0.27px;">0.00</span>
<span style="left:999px;width:58px;transform:scaleX(0.840);transform-origin:0 0;">XML</span>
</div>
<i class="hl" style="top:530px"></i>
<div class="row" style="top:531px">
<span style="left:1px;width:73px;letter-spacing:-0.247px;">Lake Buena…</span>
<span style="left:76px;width:118px;letter-spacing:-0.023px;">Westgate Blue Tree …</span>
<span style="left:196px;width:38px;letter-spacing:0.234px;">3.5</span>
<span style="left:236px;width:73px;letter-spacing:-0.309px;">Room Only</span>
<span style="left:311px;width:88px;letter-spacing:-0.2px;">2 Bedroom (3 …</span>
<span style="left:401px;width:33px;letter-spacing:-0.323px;">Thu</span>
<span style="left:436px;width:66px;letter-spacing:0.069px;">10/08/2017</span>
<span style="left:504px;width:33px;letter-spacing:-0.323px;">Thu</span>
<span style="left:539px;width:66px;letter-spacing:0.144px;">24/08/2017</span>
<span style="left:607px;width:60px;letter-spacing:-0.227px;">Ocean B…</span>
<span class="r" style="left:743px;width:51px;">1,676.99</span>
<span class="r" style="left:798px;width:51px;">559.00</span>
<span class="r" style="left:853px;width:61px;">1,676.99</span>
<span class="r" style="left:918px;width:51px;letter-spacing:0.27px;">0.00</span>
<span style="left:999px;width:58px;transform:scaleX(0.840);transform-origin:0 0;">XML</span>
</div>
<i class="hl" style="top:545px"></i>
<div class="row" style="top:546px">
<span style="left:1px;width:73px;letter-spacing:-0.247px;">Lake Buena…</span>
<span style="left:76px;width:118px;letter-spacing:-0.023px;">Westgate Blue Tree …</span>
<span style="left:196px;width:38px;letter-spacing:0.468px;">3.0</span>
<span style="left:236px;width:73px;letter-spacing:-0.309px;">Room Only</span>
<span style="left:311px;width:88px;letter-spacing:-0.2px;">1 Bedroom - 2 …</span>
<span style="left:401px;width:33px;letter-spacing:-0.323px;">Thu</span>
<span style="left:436px;width:66px;letter-spacing:0.069px;">10/08/2017</span>
<span style="left:504px;width:33px;letter-spacing:-0.323px;">Thu</span>
<span style="left:539px;width:66px;letter-spacing:0.144px;">24/08/2017</span>
<span style="left:607px;width:60px;letter-spacing:-0.116px;">Get A Bed</span>
<svg class="a" style="left:677px;top:2px" width="5" height="5" viewBox="0 0 5 5" shape-rendering="crispEdges"><path d="M2 0h1v5h-1zM0 1h1v1h-1zM4 1h1v1h-1zM1 2h3v1h-3zM0 3h1v1h-1zM4 3h1v1h-1z" fill="#000"/></svg>
<span class="r" style="left:743px;width:51px;">1,711.13</span>
<span class="r" style="left:798px;width:51px;">570.38</span>
<span class="r" style="left:853px;width:61px;">1,711.13</span>
<span class="r" style="left:918px;width:51px;letter-spacing:0.27px;">0.00</span>
<span style="left:999px;width:58px;transform:scaleX(0.840);transform-origin:0 0;">XML</span>
</div>
<i class="hl" style="top:560px"></i>
<div class="row" style="top:561px">
<span style="left:1px;width:73px;letter-spacing:-0.247px;">Lake Buena…</span>
<span style="left:76px;width:118px;letter-spacing:-0.023px;">Westgate Blue Tree …</span>
<span style="left:196px;width:38px;letter-spacing:-0.123px;">4 Stars</span>
<span style="left:236px;width:73px;letter-spacing:-0.309px;">Room Only</span>
<span style="left:311px;width:88px;letter-spacing:-0.2px;">Triple 2 Bedroo…</span>
<span style="left:401px;width:33px;letter-spacing:-0.323px;">Thu</span>
<span style="left:436px;width:66px;letter-spacing:0.069px;">10/08/2017</span>
<span style="left:504px;width:33px;letter-spacing:-0.323px;">Thu</span>
<span style="left:539px;width:66px;letter-spacing:0.144px;">24/08/2017</span>
<span style="left:607px;width:60px;letter-spacing:-0.116px;">Hotelbeds</span>
<span class="r" style="left:743px;width:51px;">1,719.89</span>
<span class="r" style="left:798px;width:51px;">573.30</span>
<span class="r" style="left:853px;width:61px;">1,719.89</span>
<span class="r" style="left:918px;width:51px;letter-spacing:0.27px;">0.00</span>
<span style="left:999px;width:58px;transform:scaleX(0.840);transform-origin:0 0;">XML</span>
</div>
<i class="hl" style="top:575px"></i>
<div class="row" style="top:576px">
<span style="left:1px;width:73px;letter-spacing:0.118px;">Downtown …</span>
<span style="left:76px;width:118px;letter-spacing:-0.023px;">Westgate Blue Tree …</span>
<span style="left:196px;width:38px;letter-spacing:1.297px;">4*</span>
<span style="left:236px;width:73px;letter-spacing:-0.216px;">Roomonly</span>
<span style="left:311px;width:88px;letter-spacing:-0.2px;">Standard, Leis…</span>
<span style="left:401px;width:33px;letter-spacing:-0.323px;">Thu</span>
<span style="left:436px;width:66px;letter-spacing:0.069px;">10/08/2017</span>
<span style="left:504px;width:33px;letter-spacing:-0.323px;">Thu</span>
<span style="left:539px;width:66px;letter-spacing:0.144px;">24/08/2017</span>
<span style="left:607px;width:60px;letter-spacing:0.052px;">Tourico …</span>
<svg class="a" style="left:677px;top:2px" width="5" height="5" viewBox="0 0 5 5" shape-rendering="crispEdges"><path d="M2 0h1v5h-1zM0 1h1v1h-1zM4 1h1v1h-1zM1 2h3v1h-3zM0 3h1v1h-1zM4 3h1v1h-1z" fill="#000"/></svg>
<span class="r" style="left:743px;width:51px;">1,724.53</span>
<span class="r" style="left:798px;width:51px;">574.84</span>
<span class="r" style="left:853px;width:61px;">1,724.53</span>
<span class="r" style="left:918px;width:51px;letter-spacing:0.27px;">0.00</span>
<span style="left:999px;width:58px;transform:scaleX(0.840);transform-origin:0 0;">XML</span>
</div>
<i class="hl" style="top:590px"></i>
<div class="row" style="top:591px">
<span style="left:1px;width:73px;letter-spacing:-0.2px;">Orlando Int…</span>
<span style="left:76px;width:118px;letter-spacing:-0.2px;">Bluegreen Vacations …</span>
<span style="left:196px;width:38px;letter-spacing:0.468px;">0.0</span>
<span style="left:236px;width:73px;letter-spacing:-0.309px;">Room Only</span>
<span style="left:311px;width:88px;letter-spacing:-0.2px;">Suite, Non Sm…</span>
<span style="left:401px;width:33px;letter-spacing:-0.323px;">Thu</span>
<span style="left:436px;width:66px;letter-spacing:0.069px;">10/08/2017</span>
<span style="left:504px;width:33px;letter-spacing:-0.323px;">Thu</span>
<span style="left:539px;width:66px;letter-spacing:0.144px;">24/08/2017</span>
<span style="left:607px;width:60px;letter-spacing:-0.116px;">Get A Bed</span>
<span class="r" style="left:743px;width:51px;">1,762.26</span>
<span class="r" style="left:798px;width:51px;">587.42</span>
<span class="r" style="left:853px;width:61px;">1,762.26</span>
<span class="r" style="left:918px;width:51px;letter-spacing:0.27px;">0.00</span>
<span style="left:999px;width:58px;transform:scaleX(0.840);transform-origin:0 0;">XML</span>
</div>
<i class="hl" style="top:605px"></i>
<i class="vl" style="left:77px"></i>
<i class="vl" style="left:197px"></i>
<i class="vl" style="left:237px"></i>
<i class="vl" style="left:312px"></i>
<i class="vl" style="left:402px"></i>
<i class="vl" style="left:437px"></i>
<i class="vl" style="left:505px"></i>
<i class="vl" style="left:540px"></i>
<i class="vl" style="left:608px"></i>
<i class="vl" style="left:670px"></i>
<i class="vl" style="left:695px"></i>
<i class="vl" style="left:720px"></i>
<i class="vl" style="left:745px"></i>
<i class="vl" style="left:800px"></i>
<i class="vl" style="left:855px"></i>
<i class="vl" style="left:920px"></i>
<i class="vl" style="left:975px"></i>
<i class="vl" style="left:1000px"></i>
<i class="vl" style="left:1060px"></i>
<i class="vl" style="left:1135px"></i>
<div class="a" style="left:1356px;top:2px;width:16px;height:603px;background-color:#fff;background-image:linear-gradient(45deg,#d4d0c8 25%,transparent 25%,transparent 75%,#d4d0c8 75%),linear-gradient(45deg,#d4d0c8 25%,transparent 25%,transparent 75%,#d4d0c8 75%);background-size:2px 2px;background-position:0 0,1px 1px"></div>
<div class="a" style="left:1356px;top:2px;width:16px;height:16px;background:#d4d0c8;border:1px solid;border-color:#d4d0c8 #404040 #404040 #d4d0c8;box-shadow:inset 1px 1px 0 #fff,inset -1px -1px 0 #808080"></div>
<svg class="a" style="left:1360px;top:8px" width="7" height="4" viewBox="0 0 7 4"><path d="M3 0h1v1h1v1h1v1h1v1h-7v-1h1v-1h1v-1h1z" fill="#000"/></svg>
<div class="a" style="left:1356px;top:18px;width:16px;height:448px;background:#d4d0c8;border:1px solid;border-color:#d4d0c8 #404040 #404040 #d4d0c8;box-shadow:inset 1px 1px 0 #fff,inset -1px -1px 0 #808080"></div>
<div class="a" style="left:1356px;top:589px;width:16px;height:16px;background:#d4d0c8;border:1px solid;border-color:#d4d0c8 #404040 #404040 #d4d0c8;box-shadow:inset 1px 1px 0 #fff,inset -1px -1px 0 #808080"></div>
<svg class="a" style="left:1360px;top:595px" width="7" height="4" viewBox="0 0 7 4"><path d="M0 0h7v1h-1v1h-1v1h-1v1h-1v-1h-1v-1h-1v-1h-1z" fill="#000"/></svg>
<div class="a" style="left:0px;top:0px;width:1374px;height:1px;background:#808080"></div>
<div class="a" style="left:0px;top:0px;width:1px;height:607px;background:#808080"></div>
<div class="a" style="left:1px;top:1px;width:1372px;height:1px;background:#404040"></div>
<div class="a" style="left:1px;top:1px;width:1px;height:605px;background:#404040"></div>
<div class="a" style="left:1373px;top:0px;width:1px;height:607px;background:#fff"></div>
<div class="a" style="left:0px;top:606px;width:1374px;height:1px;background:#fff"></div>
<div class="a" style="left:1372px;top:1px;width:1px;height:605px;background:#ebe9e4"></div>
</div>
</body></html>
